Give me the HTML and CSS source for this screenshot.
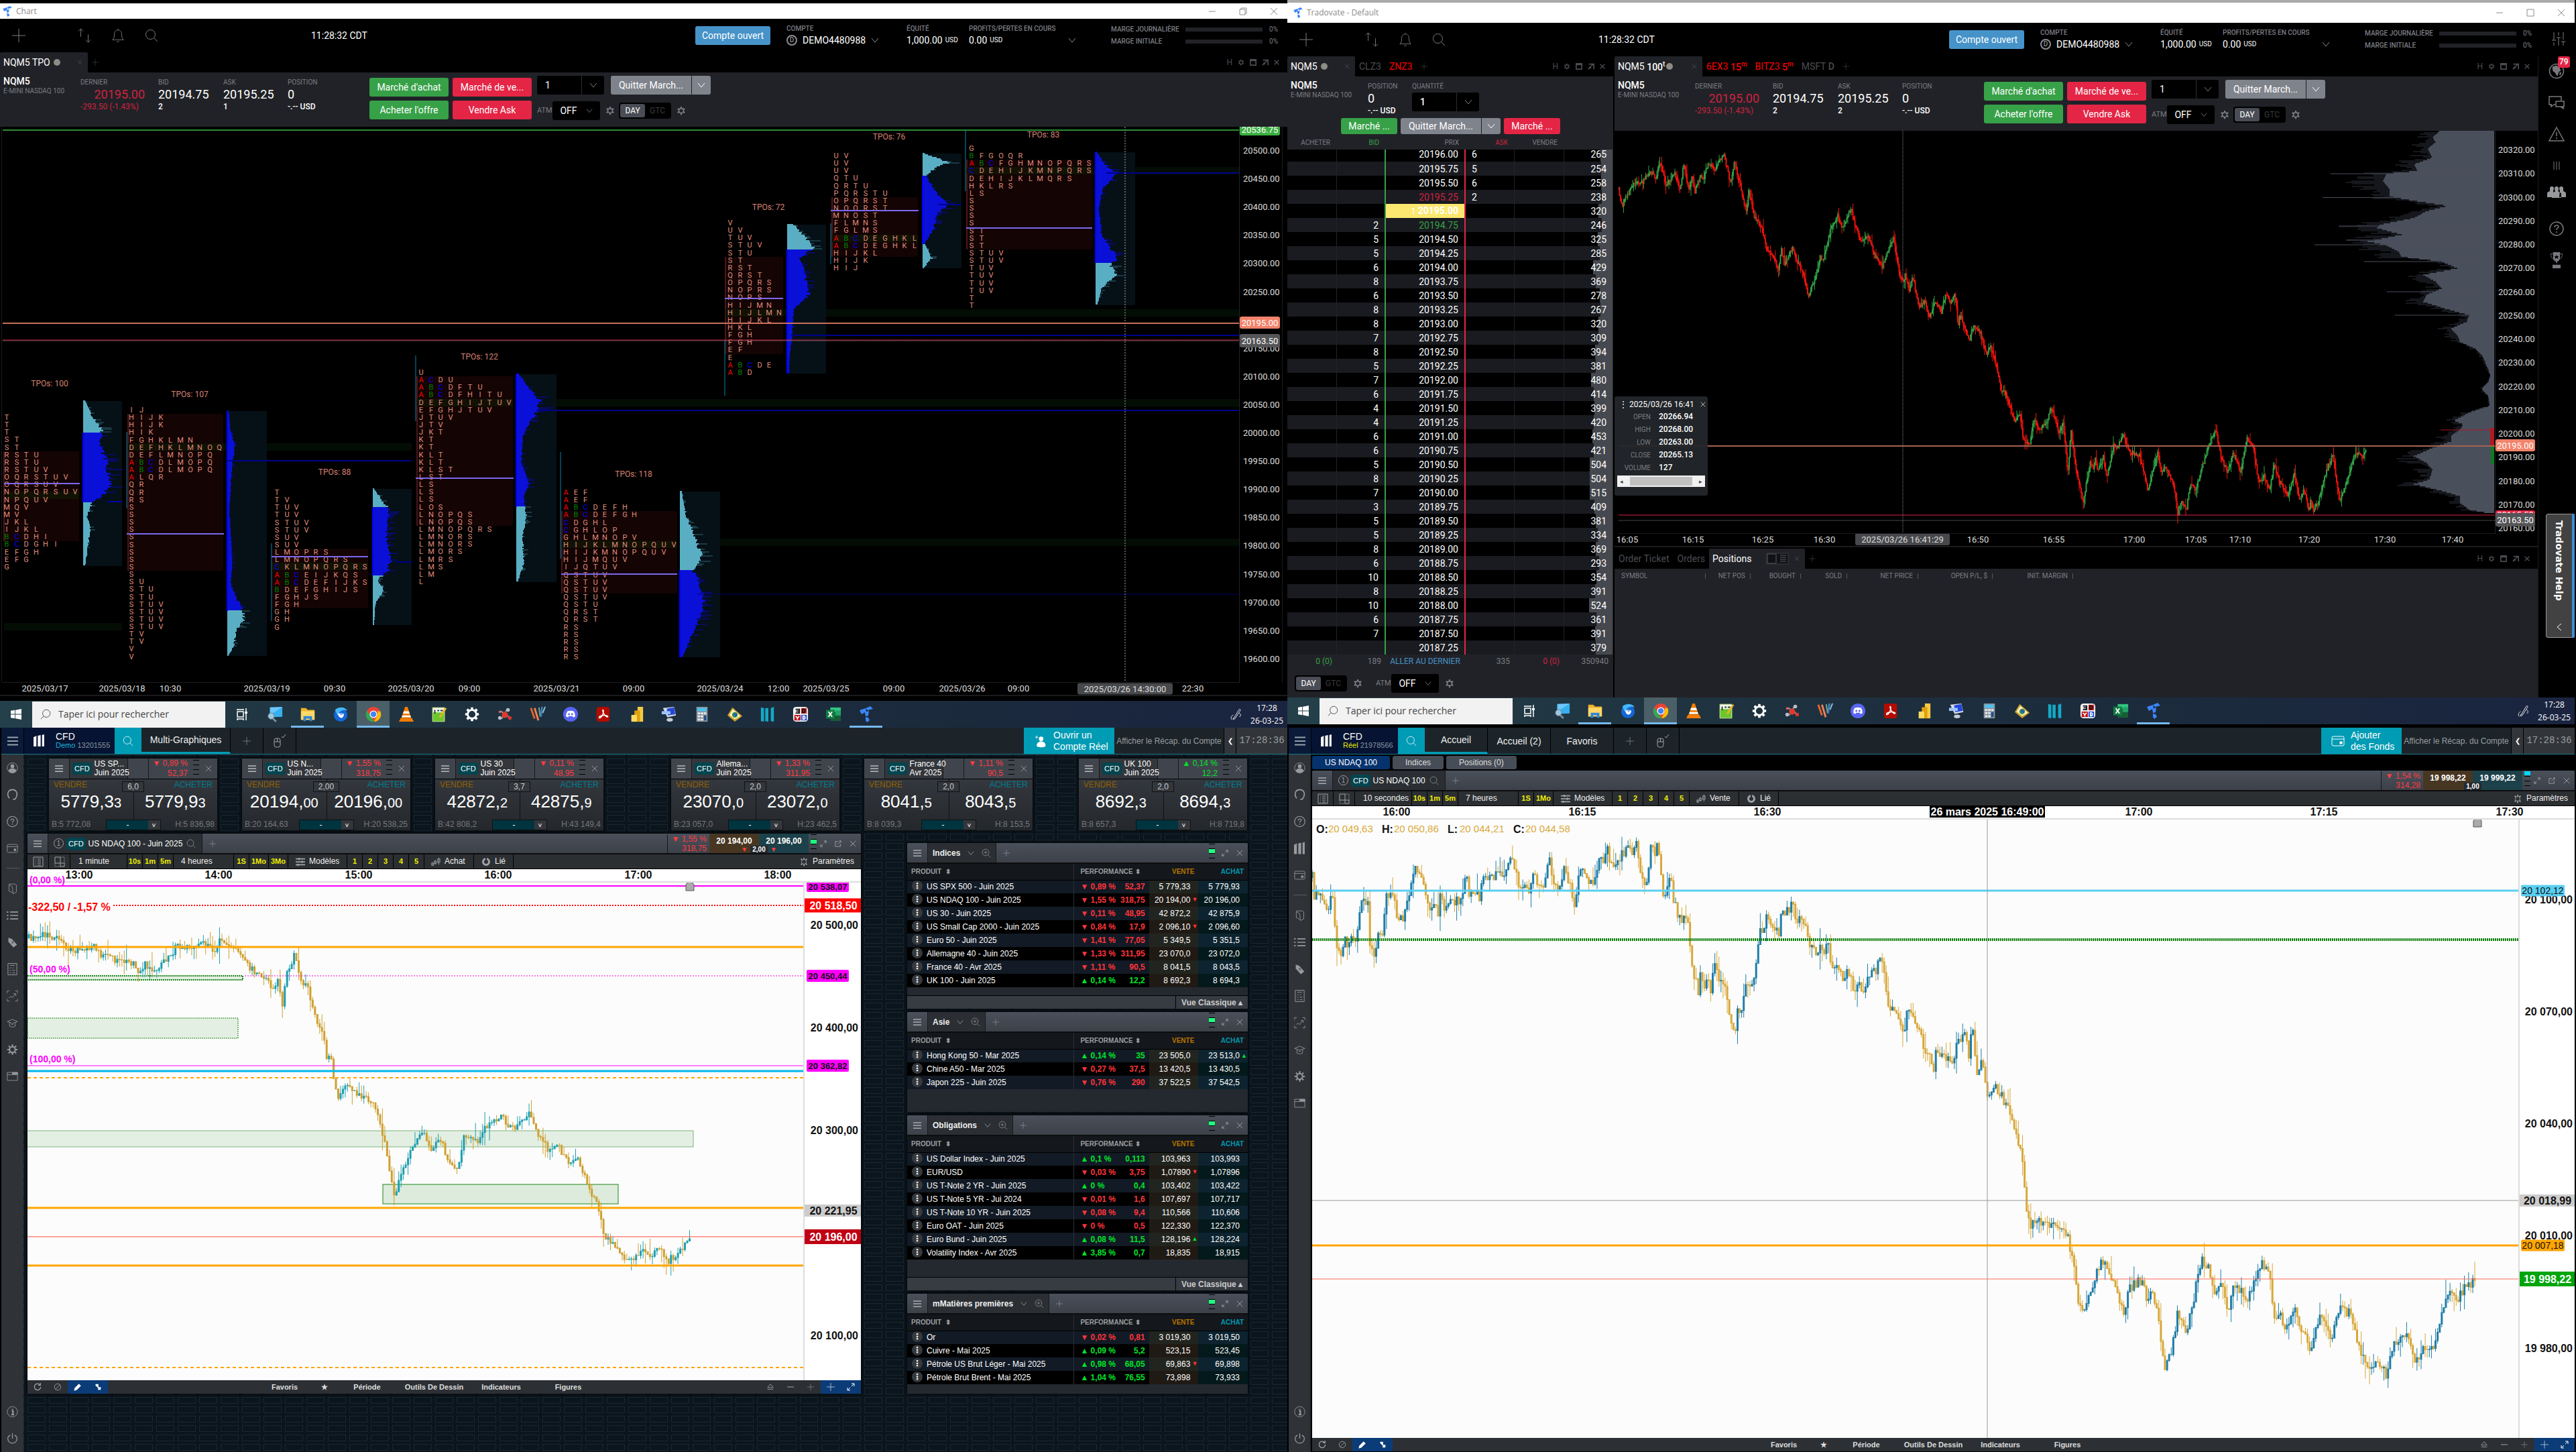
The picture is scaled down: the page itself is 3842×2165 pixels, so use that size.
FILE: index.html
```html
<!DOCTYPE html>
<html lang="fr">
<head>
<meta charset="utf-8">
<title>Poste de trading</title>
<link rel="stylesheet" href="styles.css">
</head>
<body>
<svg class="sprite" aria-hidden="true">
  <symbol id="i-plus" viewBox="0 0 20 20"><path d="M10 0v20M0 10h20"/></symbol>
  <symbol id="i-arrows" viewBox="0 0 22 24"><path d="M5 14V1M1 5l4-4 4 4M17 10v13M13 19l4 4 4-4"/></symbol>
  <symbol id="i-bell" viewBox="0 0 20 22"><path d="M1 18h18c-2-2-3-4-3-9 0-4-2-7-6-7S4 5 4 9c0 5-1 7-3 9zM8 21h4M10 0v2"/></symbol>
  <symbol id="i-search" viewBox="0 0 20 20"><circle cx="8.500" cy="8.500" r="7"/><path d="M13.500 13.500L19 19"/></symbol>
  <symbol id="i-zoom" viewBox="0 0 20 20"><circle cx="8.500" cy="8.500" r="7"/><path d="M13.500 13.500L19 19M5 8.500h7M8.500 5v7"/></symbol>
  <symbol id="i-x" viewBox="0 0 12 12"><path d="M1 1l10 10M11 1L1 11"/></symbol>
  <symbol id="i-min" viewBox="0 0 12 12"><path d="M1 6h10"/></symbol>
  <symbol id="i-restore" viewBox="0 0 12 12"><path d="M1 3h8v8H1zM3 3V1h8v8H9"/></symbol>
  <symbol id="i-box" viewBox="0 0 12 12"><path d="M1 1h10v10H1z"/></symbol>
  <symbol id="i-max" viewBox="0 0 12 12"><path d="M1 1h10v10H1zM1 3h10"/></symbol>
  <symbol id="i-out" viewBox="0 0 12 12"><path d="M2 2h9v9M11 1L6 6M1 11l4-4M3 7h2v3"/></symbol>
  <symbol id="i-pop" viewBox="0 0 12 12"><path d="M6 2H1v9h9V6M11 1L5 7M8 1h3v3"/></symbol>
  <symbol id="i-chev" viewBox="0 0 12 12"><path d="M1 3l5 6 5-6"/></symbol>
  <symbol id="i-gear" viewBox="0 0 16 16"><circle cx="8" cy="8" r="4" stroke-width="2"/><path stroke-width="2.400" d="M8 1v3M8 12v3M2 4.500l2.500 1.500M11.500 10L14 11.500M2 11.500L4.500 10M11.500 6L14 4.500"/></symbol>
  <symbol id="i-menu" viewBox="0 0 16 14"><path d="M0 1.500h16M0 7h16M0 12.500h16" stroke-width="2"/></symbol>
  <symbol id="i-tv" viewBox="0 0 20 24"><path fill="#3b86f7" stroke="none" d="M0 6l9-3 1 5-7 4zM9 3l7-3 4 4-8 2zM8 9l6-2-1 7-4 1zM9 16l4 1 2 4-4 3-2-3z"/></symbol>
  <symbol id="i-sliders" viewBox="0 0 20 20"><path d="M3 0v12M3 15v5M0 12h6M10 0v5M10 8v12M7 8h6M17 0v11M17 14v6M14 14h6"/></symbol>
  <symbol id="i-globe" viewBox="0 0 24 24"><circle cx="12" cy="12" r="10.500" stroke-width="1.500"/><path fill="currentColor" d="M6 6l6-2 4 3 2 4-3 2-2 6-3-5-3-2zM17 14l2 1-2 3z"/></symbol>
  <symbol id="i-chat" viewBox="0 0 24 20"><path stroke-width="1.500" d="M5 13H1V1h18v6M4 12v4l4-3h2M11 8h12v8h-3l3 3M11 8v8h7l4 3"/></symbol>
  <symbol id="i-warn" viewBox="0 0 24 22"><path stroke-width="1.500" d="M12 1l11 20H1zM12 8v6M12 16v2"/></symbol>
  <symbol id="i-bars3" viewBox="0 0 12 12"><path d="M2 0v12M6 0v12M10 0v12"/></symbol>
  <symbol id="i-people" viewBox="0 0 28 18"><path fill="currentColor" stroke="none" d="M4 4a3 3 0 016 0c0 2-1 3-1 4l1 9H0v-5c0-3 2-3 4-4zM24 4a3 3 0 00-6 0c0 2 1 3 1 4l-1 9h10v-5c0-3-2-3-4-4zM11 4a3 3 0 016 0c0 3-1 4 0 5 2 1 4 1 4 4v5H7v-5c0-3 2-3 4-4s0-2 0-5z"/></symbol>
  <symbol id="i-help" viewBox="0 0 22 22"><circle cx="11" cy="11" r="10" stroke-width="1.500"/><path stroke-width="1.500" d="M8 9c0-4 6-4 6-1 0 2-3 2-3 5M11 15v2"/></symbol>
  <symbol id="i-cup" viewBox="0 0 22 28"><path fill="currentColor" stroke="none" d="M5 0h12v9c0 5-3 7-5 7v3h-2v-3c-2 0-5-2-5-7zM4 22h14v6H4z"/><path d="M5 3H1c0 6 2 8 5 9M17 3h4c0 6-2 8-5 9"/><path fill="#000" stroke="none" d="M11 4l1 3h3l-2 2 1 3-3-2-3 2 1-3-2-2h3z"/></symbol>
  <symbol id="i-user" viewBox="0 0 20 20"><circle cx="10" cy="10" r="9"/><circle cx="10" cy="7" r="3.500" fill="currentColor" stroke="none"/><path fill="currentColor" stroke="none" d="M3 15c2-4 4-4 7-4s5 0 7 4c-4 5-10 5-14 0z"/></symbol>
  <symbol id="i-adduser" viewBox="0 0 20 24"><path d="M0 5h6M3 2v6"/><circle cx="11" cy="8" r="4" fill="currentColor" stroke="none"/><path fill="currentColor" stroke="none" d="M3 20c0-10 16-10 16 0 0 4-16 4-16 0z"/></symbol>
  <symbol id="i-headset" viewBox="0 0 20 20"><path stroke-width="2" d="M3 14c-3-8 1-13 7-13s10 5 7 13M3 14l2 2M17 14l-3 4h-3"/></symbol>
  <symbol id="i-card" viewBox="0 0 20 16"><rect x="1" y="1" width="18" height="14" rx="2"/><path d="M1 5h18"/><rect x="13" y="9" width="3" height="3" fill="currentColor"/></symbol>
  <symbol id="i-cmc" viewBox="0 0 16 18"><path fill="currentColor" stroke="none" d="M0 4l4-2v15H0zM6 2l4-1v16H6zM12 1l3-1v17h-3z"/></symbol>
  <symbol id="i-doc" viewBox="0 0 20 20"><path d="M4 2h11l2 2v12l-6 3-1-12-6-4v11l6 3"/></symbol>
  <symbol id="i-list" viewBox="0 0 20 16"><path stroke-width="2" d="M0 2h3M6 2h14M0 8h3M6 8h14M0 14h3M6 14h14"/></symbol>
  <symbol id="i-tag" viewBox="0 0 20 20"><path fill="currentColor" stroke="none" d="M3 2l6 2 9 10-6 5L3 9z"/><path stroke="#2f3236" d="M8 8l4 4M9 12l3-4"/></symbol>
  <symbol id="i-calc" viewBox="0 0 18 20"><path d="M2 1h14v18H2zM5 4h8M5 8h2M9 8h2M5 12h2M9 12h4M5 16h2M9 16h4"/></symbol>
  <symbol id="i-scan" viewBox="0 0 20 20"><path d="M1 5V1h4M15 1h4v4M19 15v4h-4M5 19H1v-4M4 13l3-2 3 2 5-7M12 6h4v4"/></symbol>
  <symbol id="i-grad" viewBox="0 0 20 16"><path d="M1 6l9-4 9 4-9 3zM5 8v6c3 2 7 2 10 0V8M8 11h4"/></symbol>
  <symbol id="i-cog" viewBox="0 0 20 20"><circle cx="10" cy="10" r="5" stroke-width="2.500"/><path stroke-width="2.500" d="M10 1v3M10 16v3M1 10h3M16 10h3M3.500 3.500l2 2M14.500 14.500l2 2M3.500 16.500l2-2M14.500 5.500l2-2"/></symbol>
  <symbol id="i-win" viewBox="0 0 20 16"><path d="M1 1h18v14H1zM1 5h18"/><path fill="currentColor" d="M10 1h9v3h-9z"/></symbol>
  <symbol id="i-info" viewBox="0 0 20 20"><circle cx="10" cy="10" r="9"/><path stroke-width="2.500" d="M10 5v2M9 9h2v6M8 15h5"/></symbol>
  <symbol id="i-power" viewBox="0 0 20 20"><path stroke-width="1.500" d="M10 1v9M6 4c-7 4-4 14 4 14s11-10 4-14"/></symbol>
  <symbol id="i-mouse" viewBox="0 0 20 20"><rect x="2" y="6" width="9" height="13" rx="3"/><path d="M2 11h9M6.500 6v5M13 3l2 2 4-5"/></symbol>
  <symbol id="i-win10" viewBox="0 0 18 18"><path fill="#fff" stroke="none" d="M0 3l7-1v6.500H0zM8 2l10-2v8.500H8zM0 9.500h7V16l-7-1zM8 9.500h10V18L8 16z"/></symbol>
  <symbol id="i-pagelist" viewBox="0 0 16 16"><path d="M1 1h14v14H1zM4 4h1M7 4h5M4 7h1M7 7h5M4 10h1M7 10h5M4 13h1M7 13h5"/></symbol>
  <symbol id="i-split" viewBox="0 0 34 18"><path fill="#111216" stroke="#3a3b40" d="M1 1h32v16H1z"/><path d="M2 2h13v14H2zM21 4h9M21 7h9M21 10h9M21 13h9"/></symbol>
  <symbol id="i-grid" viewBox="0 0 16 16"><path d="M1 1h8v9H1zM9 10h6v5H9z"/><path stroke-dasharray="1 1" d="M9 1h6v9M1 10v5h8"/></symbol>
  <symbol id="i-models" viewBox="0 0 16 14"><path stroke-width="2" d="M0 2h5M7 2h9M0 7h10M12 7h4M0 12h3M5 12h11M6 0v4M11 5v4M4 10v4"/></symbol>
  <symbol id="i-candles" viewBox="0 0 16 14"><path d="M2 8v6M1 9h3v4H1zM7 4v8M5 6h4v4H5zM13 0v12M11 2h4v6h-4z"/></symbol>
  <symbol id="i-link" viewBox="0 0 14 14"><circle cx="7" cy="7" r="4.500" stroke-width="3"/><path stroke="#2b2f33" stroke-width="2" d="M7 0v5"/></symbol>
  <symbol id="i-bulb" viewBox="0 0 16 16"><circle cx="8" cy="8" r="4"/><path stroke-width="2" d="M8 1v3M8 12v3M3 3l2 2M11 11l2 2M3 13l2-2M11 5l2-2"/></symbol>
  <symbol id="i-expand" viewBox="0 0 12 12"><path d="M7 1h4v4M11 1L7 5M5 11H1V7M1 11l4-4"/></symbol>
  <symbol id="i-refresh" viewBox="0 0 14 14"><path stroke-width="1.500" d="M11 3a5.500 5.500 0 101.500 4M12 0v4H8"/></symbol>
  <symbol id="i-ban" viewBox="0 0 14 14"><circle cx="7" cy="7" r="5.500"/><path d="M3 11l8-8"/></symbol>
  <symbol id="i-pencil" viewBox="0 0 14 14"><path fill="currentColor" d="M1 13l1-4 7-7 3 3-7 7z"/></symbol>
  <symbol id="i-node" viewBox="0 0 14 14"><path stroke-width="2" d="M3 3h4v4M3 3l8 8M7 11h4V7"/></symbol>
  <symbol id="i-eject" viewBox="0 0 14 14"><path d="M7 2l5 6H2zM2 11h10"/></symbol>
  <symbol id="i-taskview" viewBox="0 0 18 18"><path stroke-width="1.500" d="M2 5h9v8H2zM2 1v2M11 1v2M2 2h9M2 16h9M2 18v-3M11 18v-3M15 0v5M15 8v10"/><path stroke-width="3" d="M13 6.500h4"/></symbol>
  <symbol id="i-pen" viewBox="0 0 18 20"><path d="M5 18l9-15c2-3 4-1 2 2L8 17c-2 3-4 2-3-1M5 11c-4 2-5 7-2 8M15 8c4 3 2 6 0 6"/></symbol>
  <symbol id="t-loupe" viewBox="0 0 26 26"><path fill="#38b0f0" d="M5 2l20-1v16l-20 1z"/><path fill="#8ed8ff" d="M5 2l20-1L5 14z" opacity=".6"/><circle cx="7" cy="16" r="5" fill="#9fc6dc" stroke="#5e7f92"/><path stroke="#7c8f9a" stroke-width="3" d="M10 20l5 5"/></symbol>
  <symbol id="t-folder" viewBox="0 0 26 26"><path fill="#f0b429" d="M2 3h8l3 3h11v16H2z"/><path fill="#ffd869" d="M2 8h22v14H2z"/><path fill="#2f86d6" d="M6 24v-8h14v8h-4v-4h-6v4z"/></symbol>
  <symbol id="t-bird" viewBox="0 0 26 26"><circle cx="13" cy="14" r="11" fill="#1566d6"/><path fill="#44b8ff" d="M4 6c6-6 16-5 20 1-6-2-14 0-16 8z"/><path fill="#fff" d="M9 11l9 1c1 4-2 7-4 7s-6-3-5-8z"/><path fill="#7fb5ee" d="M9 11l5 4 4-3z"/></symbol>
  <symbol id="t-chrome" viewBox="0 0 26 26"><circle cx="13" cy="13" r="12" fill="#ea4335"/><path fill="#34a853" d="M2.500 7L9 17l5 8C3 26-2 15 2.500 7z"/><path fill="#fbbc05" d="M14 25l5-10 1-7h4c4 9-3 17-10 17z"/><circle cx="13" cy="13" r="6" fill="#fff"/><circle cx="13" cy="13" r="4.600" fill="#4285f4"/></symbol>
  <symbol id="t-vlc" viewBox="0 0 26 26"><path fill="#f57c00" d="M11 1h4l6 18H5z"/><path fill="#fff" d="M9 8h8l1.500 4H7.500zM6.500 15h13l1 3h-15z"/><path fill="#f57c00" d="M4 19h18l3 6H1z"/></symbol>
  <symbol id="t-note" viewBox="0 0 26 26"><path fill="#f4f8ea" stroke="#6b8e3c" d="M2 2h20v23H2z"/><path fill="#6bc62c" d="M3 10h18v14H3z"/><path stroke="#234" stroke-width="2" d="M6 6v6M10 7h3M15 7h4"/><path stroke="#e8b422" stroke-width="3" d="M14 18L24 3"/></symbol>
  <symbol id="t-gear" viewBox="0 0 26 26"><circle cx="13" cy="13" r="7" fill="none" stroke="#fff" stroke-width="3"/><path stroke="#fff" stroke-width="4" d="M13 2v4M13 20v4M2 13h4M20 13h4M5 5l3 3M18 18l3 3M5 21l3-3M18 8l3-3"/></symbol>
  <symbol id="t-crab" viewBox="0 0 26 26"><path stroke="#99a" stroke-width="2" d="M6 8l7 4 4-8M8 20l5-7 8 5"/><circle cx="13" cy="14" r="5" fill="#e03a2f"/><circle cx="5" cy="19" r="3" fill="#b8bfc6"/><circle cx="21" cy="19" r="3" fill="#d33"/><circle cx="5" cy="9" r="2" fill="#d66"/><circle cx="18" cy="6" r="3" fill="#b8bfc6"/></symbol>
  <symbol id="t-lines" viewBox="0 0 26 26"><path stroke="#e8662d" stroke-width="3" d="M2 3l6 17"/><path stroke="#f0835a" stroke-width="3" d="M8 3l6 20"/><path stroke="#7fa98a" stroke-width="2" d="M15 2l2 15"/><path stroke="#3d7fb8" stroke-width="3" d="M20 1l-2 16"/><path stroke="#8fc2e8" stroke-width="2" d="M25 1l-4 10"/></symbol>
  <symbol id="t-discord" viewBox="0 0 26 26"><circle cx="13" cy="13" r="12" fill="#5865f2"/><path fill="#fff" d="M8 8c3-1 7-1 10 0 2 3 3 6 2 9l-3 1-1-2h-6l-1 2-3-1c-1-3 0-6 2-9z"/><circle cx="10.500" cy="13" r="1.600" fill="#5865f2"/><circle cx="15.500" cy="13" r="1.600" fill="#5865f2"/></symbol>
  <symbol id="t-pdf" viewBox="0 0 26 26"><rect x="2" y="1" width="21" height="24" rx="4" fill="#b30b00"/><path fill="none" stroke="#fff" stroke-width="1.600" d="M12 6c2 0 1 5-1 9s-5 5-5 3 6-4 11-3 3 3 1 2-7-7-6-11z"/></symbol>
  <symbol id="t-bi" viewBox="0 0 26 26"><path fill="#f6c944" d="M15 1h9v24h-9z"/><path fill="#e0a00c" d="M10 7h9v18h-9z"/><path fill="#fbdb62" d="M5 14h9v11H5z"/></symbol>
  <symbol id="t-pc" viewBox="0 0 26 26"><path fill="#d6dcea" d="M3 3l18-2 3 14-14 3z"/><path fill="#2446d8" d="M9 4l12-2 2 11-12 2z"/><path fill="#9ec3ff" d="M1 8h14v5H1z"/><ellipse cx="14" cy="22" rx="5" ry="3" fill="#c8ccd6"/></symbol>
  <symbol id="t-calc" viewBox="0 0 26 26"><path fill="#8c959e" d="M4 1h18v24H4z"/><path fill="#45c4f4" d="M6 3h14v5H6z"/><path fill="#e6eaee" d="M6 10h4v3H6zM11 10h4v3h-4zM16 10h4v3h-4zM6 15h4v3H6zM11 15h4v3h-4zM6 20h4v3H6zM11 20h4v3h-4z"/><path fill="#1e4f8a" d="M16 15h4v8h-4z"/></symbol>
  <symbol id="t-gold" viewBox="0 0 26 26"><path fill="#c8a02e" d="M1 15L9 2l16 14-12 9z"/><path fill="#fff3c0" d="M4 14l6-9 12 11-9 5z"/><circle cx="13" cy="14" r="4.500" fill="#2f8f5b"/><path fill="#2c58c0" d="M10 12l5 5 2-5z"/></symbol>
  <symbol id="t-cmc" viewBox="0 0 26 26"><path fill="#14a9c4" d="M2 2l5 1v22l-5-1zM9 3l5 0v22l-5-1zM18 3l5-2v24l-5-1z"/></symbol>
  <symbol id="t-cells" viewBox="0 0 26 26"><rect x="1" y="1" width="24" height="24" rx="5" fill="#f4f4f4"/><path fill="#d22" d="M14 3h9v9h-9z"/><path fill="#c2161e" d="M3 14h10v9H3z"/><path fill="#234bd8" d="M14 14h9v9h-9z"/><path fill="none" stroke="#111" stroke-width="2" d="M5 5h6v6H5M6 8h5M16 5v5h2c3 0 3-5 0-5z"/><path fill="none" stroke="#fff" stroke-width="1.800" d="M5 16l3 3 3-3M8 19v3M17 16v5h1c3 0 3-5 0-5z"/></symbol>
  <symbol id="t-xl" viewBox="0 0 26 26"><path fill="#33c481" d="M8 2h17v8H8z"/><path fill="#185c37" d="M8 12h17v12H8z"/><path fill="#21a366" d="M16 7h9v8h-9z"/><path fill="#107c41" d="M1 6h14v14H1z"/><path stroke="#fff" stroke-width="2" d="M5 9l6 8M11 9l-6 8"/></symbol>
</svg>

<main class="desktop">
  <section class="column">
    <!-- Detached chart window -->
    <div class="screen screen--chart">
      <header class="titlebar"><svg class="ic logo"><use href="#i-tv"/></svg><span>Chart</span><span class="grow"></span>
        <button class="wbtn" aria-label="Réduire"><svg class="ic s12"><use href="#i-min"/></svg></button><button class="wbtn" aria-label="Restaurer"><svg class="ic s12"><use href="#i-restore"/></svg></button><button class="wbtn" aria-label="Fermer"><svg class="ic s12"><use href="#i-x"/></svg></button></header>
      <div class="tools" data-tools></div>
      <nav class="tabs"><button class="tab tab--on tab--first">NQM5 TPO <i class="dot"></i><svg class="ic s8 end"><use href="#i-x"/></svg></button><button class="tab tab--icon" aria-label="Ajouter"><svg class="ic s10"><use href="#i-plus"/></svg></button><span class="grow"></span><span class="panelctl" data-panelctl></span></nav>
      <div class="quote" data-quote="1"></div>
      <div class="plotrow tpo"><div class="plot" id="tpo"></div><div class="yaxis" id="tpo-y"></div></div>
      <div class="xaxis" id="tpo-x"></div>
    </div>
    <footer class="taskbar" data-taskbar></footer>

    <!-- CMC demo platform -->
    <section class="cmc">
      <header class="cmchead">
        <button class="burger" aria-label="Menu"><svg class="ic s16"><use href="#i-menu"/></svg></button>
        <div class="brand brand--demo"><svg class="ic cm"><use href="#i-cmc"/></svg><div><b>CFD</b><span><em>Demo</em> 13201555</span></div></div>
        <button class="find" aria-label="Rechercher"><svg class="ic s16"><use href="#i-search"/></svg></button>
        <button class="page page--on page--wide">Multi-Graphiques</button><button class="page page--sq" aria-label="Ajouter"><svg class="ic s12"><use href="#i-plus"/></svg></button><button class="page page--sq" aria-label="Souris"><svg class="ic s20"><use href="#i-mouse"/></svg></button>
        <span class="grow"></span>
        <button class="cta cta--open"><svg class="ic s20"><use href="#i-adduser"/></svg><span>Ouvrir un<br>Compte Réel</span></button>
        <a class="recap" href="#recap">Afficher le Récap. du Compte</a><button class="arrow" aria-label="Déplier">❮</button><time class="clock">17:28:36</time>
      </header>
      <div class="cmcbody">
        <aside class="rail" data-rail="demo"></aside>
        <div class="board">
          <div class="cards" id="cards"></div>
          <div class="workspace">
            <article class="panel chartpanel">
              <header class="phead"><button class="pmenu" aria-label="Menu"><svg class="ic s12"><use href="#i-menu"/></svg></button><div class="ptab"><span class="num">1</span><span class="cfd">CFD</span>US NDAQ 100 - Juin 2025<svg class="ic s14"><use href="#i-search"/></svg></div><button class="padd" aria-label="Ajouter"><svg class="ic s10"><use href="#i-plus"/></svg></button><span class="grow"></span>
                <div class="chg dn"><span>▼ 1,55 %</span><span>318,75</span></div><div class="bidask"><b class="sell">20 194,00</b><b class="buy">20 196,00</b><span class="spread"><i class="dn">▼</i><u>2,00</u><i class="dn">▼</i></span></div><span class="meter"></span><svg class="ic s10"><use href="#i-expand"/></svg><svg class="ic s10"><use href="#i-pop"/></svg><svg class="ic s10"><use href="#i-x"/></svg></header>
              <div class="ctools" data-ctools="demo"></div>
              <div class="times" id="bl-x"></div>
              <div class="plotrow blplot"><div class="plot" id="bl"></div><div class="yaxis yaxis--light" id="bl-y"></div></div>
              <footer class="cfoot" data-cfoot></footer>
            </article>
            <div class="lists" id="lists"></div>
          </div>
        </div>
      </div>
    </section>
  </section>

  <section class="column">
    <!-- Main trading window -->
    <div class="screen screen--main">
      <header class="titlebar titlebar--tall"><svg class="ic logo"><use href="#i-tv"/></svg><span>Tradovate - Default</span><span class="grow"></span>
        <button class="wbtn" aria-label="Réduire"><svg class="ic s12"><use href="#i-min"/></svg></button><button class="wbtn" aria-label="Agrandir"><svg class="ic s12"><use href="#i-box"/></svg></button><button class="wbtn" aria-label="Fermer"><svg class="ic s12"><use href="#i-x"/></svg></button></header>
      <div class="tools tools--slider" data-tools></div>
      <div class="split">
        <section class="dom">
          <nav class="tabs"><button class="tab tab--on tab--dom">NQM5 <i class="dot"></i><svg class="ic s8 end"><use href="#i-x"/></svg></button><button class="tab dim">CLZ3</button><button class="tab hot">ZNZ3</button><button class="tab tab--icon" aria-label="Ajouter"><svg class="ic s10"><use href="#i-plus"/></svg></button><span class="grow"></span><span class="panelctl" data-panelctl></span></nav>
          <div class="domhead">
            <div class="sym"><b>NQM5</b><small>E-MINI NASDAQ 100</small></div>
            <div class="fact f66"><small>POSITION</small><strong>0</strong><span>-.-- USD</span></div>
            <div class="fact"><label for="qty-dom">QUANTITÉ</label><span class="combo"><input id="qty-dom" value="1"><button aria-label="Choisir"><svg class="ic s12"><use href="#i-chev"/></svg></button></span></div>
          </div>
          <div class="dombtns"><button class="btn green">Marché ...</button><span class="duo"><button class="btn grey">Quitter March...</button><button class="btn grey" aria-label="Plus"><svg class="ic s12"><use href="#i-chev"/></svg></button></span><button class="btn red">Marché ...</button></div>
          <div class="ladderwrap"><table class="ladder"><thead><tr><th>ACHETER</th><th class="up">BID</th><th>PRIX</th><th class="down">ASK</th><th>VENDRE</th><th></th></tr></thead><tbody id="ladder"></tbody>
            <tfoot><tr><td class="up">0 (0)</td><td>189</td><td class="go">ALLER AU DERNIER</td><td>335</td><td class="down">0 (0)</td><td>350940</td></tr></tfoot></table></div>
          <div class="domfoot"><span class="seg"><button class="on">DAY</button><button>GTC</button></span><svg class="ic s14"><use href="#i-gear"/></svg><span class="atm">ATM</span><button class="off">OFF <svg class="ic s10"><use href="#i-chev"/></svg></button><svg class="ic s14"><use href="#i-gear"/></svg></div>
        </section>
        <section class="work">
          <nav class="tabs"><button class="tab tab--on tab--first">NQM5 <b>100<sup>t</sup></b> <i class="dot"></i><svg class="ic s8 end"><use href="#i-x"/></svg></button><button class="tab hot">6EX3 <b>15<sup>m</sup></b></button><button class="tab hot">BITZ3 <b>5<sup>m</sup></b></button><button class="tab dim">MSFT <b>D</b></button><button class="tab tab--icon" aria-label="Ajouter"><svg class="ic s10"><use href="#i-plus"/></svg></button><span class="grow"></span><span class="panelctl" data-panelctl></span></nav>
          <div class="quote" data-quote="2"></div>
          <div class="plotrow tick"><div class="plot" id="tick"></div><div class="yaxis" id="tick-y"></div>
            <div class="tip"><div class="tiphead">⋮ 2025/03/26 16:41<svg class="ic s8"><use href="#i-x"/></svg></div><dl><dt>OPEN</dt><dd>20266.94</dd><dt>HIGH</dt><dd>20268.00</dd><dt>LOW</dt><dd>20263.00</dd><dt>CLOSE</dt><dd>20265.13</dd><dt>VOLUME</dt><dd>127</dd></dl><div class="tipscroll"><span>◂</span><i></i><span>▸</span></div></div></div>
          <div class="xaxis" id="tick-x"></div>
          <nav class="tabs tabs--low"><button class="tab dim">Order Ticket</button><button class="tab dim">Orders</button><button class="tab tab--on tab--pos">Positions<svg class="ic twin end"><use href="#i-split"/></svg><svg class="ic s8"><use href="#i-x"/></svg></button><button class="tab tab--icon" aria-label="Ajouter"><svg class="ic s10"><use href="#i-plus"/></svg></button><span class="grow"></span><span class="panelctl" data-panelctl></span></nav>
          <div class="positions"><table><thead><tr><th>SYMBOL</th><th>NET POS</th><th>BOUGHT</th><th>SOLD</th><th>NET PRICE</th><th>OPEN P/L, $</th><th>INIT. MARGIN</th><th></th></tr></thead></table></div>
        </section>
        <aside class="side"><span class="globe"><svg class="ic s24"><use href="#i-globe"/></svg><b class="badge">79</b></span><svg class="ic s24"><use href="#i-chat"/></svg><svg class="ic s24"><use href="#i-warn"/></svg><svg class="ic s12"><use href="#i-bars3"/></svg><svg class="ic s28 lit"><use href="#i-people"/></svg><svg class="ic s22"><use href="#i-help"/></svg><svg class="ic s28"><use href="#i-cup"/></svg></aside>
        <button class="helptab"><span>Tradovate Help</span><svg class="ic s12"><use href="#i-chev"/></svg></button>
      </div>
    </div>
    <footer class="taskbar taskbar--gap" data-taskbar></footer>

    <!-- CMC live platform -->
    <section class="cmc">
      <header class="cmchead">
        <button class="burger" aria-label="Menu"><svg class="ic s16"><use href="#i-menu"/></svg></button>
        <div class="brand brand--live"><svg class="ic cm"><use href="#i-cmc"/></svg><div><b>CFD</b><span><em class="real">Réel</em> 21978566</span></div></div>
        <button class="find" aria-label="Rechercher"><svg class="ic s16"><use href="#i-search"/></svg></button>
        <button class="page page--on">Accueil</button><button class="page">Accueil (2)</button><button class="page">Favoris</button><button class="page page--sq" aria-label="Ajouter"><svg class="ic s12"><use href="#i-plus"/></svg></button><button class="page page--sq" aria-label="Souris"><svg class="ic s20"><use href="#i-mouse"/></svg></button>
        <span class="grow"></span>
        <button class="cta cta--fund"><svg class="ic s20"><use href="#i-card"/></svg><span>Ajouter<br>des Fonds</span></button>
        <a class="recap" href="#recap">Afficher le Récap. du Compte</a><button class="arrow" aria-label="Déplier">❮</button><time class="clock">17:28:36</time>
      </header>
      <div class="cmcbody">
        <aside class="rail" data-rail="live"></aside>
        <div class="live">
          <nav class="pills"><button class="pill pill--on">US NDAQ 100</button><button class="pill">Indices</button><button class="pill">Positions (0)</button></nav>
          <article class="panel livepanel">
            <header class="phead"><button class="pmenu" aria-label="Menu"><svg class="ic s12"><use href="#i-menu"/></svg></button><div class="ptab"><span class="num">1</span><span class="cfd">CFD</span>US NDAQ 100<svg class="ic s14"><use href="#i-search"/></svg></div><button class="padd" aria-label="Ajouter"><svg class="ic s10"><use href="#i-plus"/></svg></button><span class="grow"></span>
              <div class="chg dn"><span>▼ 1,54 %</span><span>314,28</span></div><div class="bidask"><b class="sell">19 998,22</b><b class="buy">19 999,22</b><span class="spread"><u>1,00</u></span></div><span class="meter meter--cyan"></span><svg class="ic s10"><use href="#i-expand"/></svg><svg class="ic s10"><use href="#i-pop"/></svg><svg class="ic s10"><use href="#i-x"/></svg></header>
            <div class="ctools" data-ctools="live"></div>
            <div class="times" id="br-x"></div>
            <div class="plotrow brplot"><div class="plot" id="br"></div><div class="yaxis yaxis--light yaxis--wide" id="br-y"></div></div>
            <footer class="cfoot" data-cfoot></footer>
          </article>
        </div>
      </div>
    </section>
  </section>
</main>
<script src="app.js"></script>
</body>
</html>
```
FILE: styles.css
```css
*{box-sizing:border-box}
body{margin:0;background:#000;color:#fff;font:12px/16px Roboto,sans-serif}
button,input{font:inherit;color:inherit;background:none;border:0;padding:0;margin:0}
table{border-collapse:collapse;width:100%}
a{color:inherit;text-decoration:none}
.sprite{display:none}
.ic{fill:none;stroke:currentColor;stroke-width:1;flex:none}
.s8{width:8px;height:8px}.s10{width:10px;height:10px}.s12{width:12px;height:12px}.s14{width:14px;height:14px}
.s16{width:16px;height:16px}.s20{width:20px;height:20px}.s22{width:22px;height:22px}.s24{width:24px;height:24px}.s28{width:28px;height:28px}
.twin{width:34px;height:18px}
.grow{flex:1}
.desktop{display:grid;grid-template-columns:minmax(0,1fr) minmax(0,1fr);padding-right:2px;overflow:hidden}
.column{min-width:0}
.dn{color:#ff3b41}

/* Trading windows */
.screen{display:flex;flex-direction:column}
.screen--chart{padding:5px 0 7px}
.screen--main{border-top:4px solid #a9a9a9}
.titlebar{display:flex;align-items:center;height:23px;background:#fff;color:#8c8c8c;font:12px/16px "Open Sans",sans-serif;padding-left:4px;gap:6px}
.titlebar--tall{height:30px;padding-left:9px}
.logo{width:14px;height:16px}
.wbtn{width:40px;display:flex;justify-content:center}
.tools{display:flex;align-items:center;height:50px;padding:0 14px 0 18px;color:#7b7d83;position:relative}
.tools--slider{padding-right:64px}
.tools .tl{display:flex;align-items:center;width:446px}
.tools .tl svg:nth-child(2){margin-left:77px;margin-right:29px}
.tools .tl svg:nth-child(3){margin-right:30px}
.tools time{color:#fff;font-size:14px}
.tools .slide{position:absolute;right:14px;top:14px}
.open{width:112px;height:28px;background:#4693c9;border-radius:3px;color:#fff;font-size:14px;margin-right:24px}
.acct{display:flex;flex-direction:column;font-size:10px;line-height:14px;font-weight:500}
.acct span{color:#fff;font-size:14px;line-height:20px;font-weight:400;display:flex;align-items:center;gap:8px}
.acct em{font-style:normal;font-size:10px;margin-left:-4px}
.acct i{font:500 10px/12px Roboto;border:2px solid #8b8d92;color:#8b8d92;border-radius:50%;width:16px;height:16px;text-align:center}
.a1{width:179px}.a2{width:93px}.a3{width:212px}
.acct svg{color:#8b8d92}
.a3 span{justify-content:flex-start;padding-right:52px}.a3 svg{margin-left:auto}
.marge{display:grid;grid-template-columns:111px 115px auto;row-gap:4px;align-items:center;font-size:10px;line-height:14px;font-weight:500}
.marge i{height:6px;background:#212227}
.marge b{font-weight:400;padding-left:10px}
.tabs{display:flex;height:30px;align-items:stretch;padding-right:6px}
.tabs--low{margin-top:2px}
.tab{display:flex;align-items:center;font-size:14px;padding:0 6px;white-space:pre}
.tab--on{background:#212227;color:#fff;padding:0 8px 0 5px;border-radius:2px 2px 0 0}
.tab--first{width:131px}.tab--dom{width:101px}.tab--pos{width:143px;gap:8px}
.tab--icon{color:#3a3b3f}
.tab .end{margin-left:auto}
.tab svg{color:#55575c}
.tab sup{font-size:10px;line-height:10px}
.tab b{font-weight:500}
.dim{color:#4b4d52}.hot{color:#f00}
.dot{width:10px;height:10px;border-radius:50%;background:#8b8d86;margin-left:2px}
.panelctl{display:flex;align-items:center;gap:8px;color:#4a4c52;font-size:12px;padding-right:6px}
.panelctl svg{stroke-width:2}
.quote,.domhead{display:flex;height:81px;background:#212227;padding:5px 5px 0}
.sym{width:115px;display:flex;flex-direction:column}
.sym b{font-weight:500;font-size:14px;line-height:16px}
.sym small,.fact small,.fact label{font-size:10px;line-height:16px;color:#7b7d83}
.sym small{line-height:14px;font-size:10px}
.fact{display:flex;flex-direction:column}
.fact small,.fact label{padding-top:2px}
.fact strong{font-weight:400;font-size:18px;line-height:20px}
.fact span{font-size:12px;line-height:17px;font-weight:500}
.fact .combo{margin-top:1px}
.last{width:96px;margin-right:20px}
.last strong{text-align:right;color:#cf2340}
.last span{color:#cf2340;font-weight:400}
.f66{width:66px}.f97{width:97px}.f96{width:96px}.f122{width:122px}
.orders{display:grid;grid-template-columns:118px 118px;grid-auto-rows:28px;gap:6px;padding-top:3px;margin-right:8px}
.btn{height:28px;border-radius:3px;color:#fff;font-size:14px;font-weight:400}
.green{background:#37a148}.red{background:#e42545}.grey{background:#7f838c}
.ctl{display:flex;flex-direction:column;gap:10px}
.ctl div{display:flex;align-items:center}
.combo{display:flex;width:100px;height:28px;background:#000;border-radius:3px}
.combo input{width:67px;padding-left:12px;font-size:14px;border-right:1px solid #2c2d33}
.combo button{flex:1;color:#7b7d83;display:flex;align-items:center;justify-content:center}
.duo{display:flex;gap:1px;margin-left:10px}
.duo .btn:first-child{width:120px;border-radius:3px 0 0 3px}
.duo .btn:last-child{width:28px;border-radius:0 3px 3px 0;display:flex;align-items:center;justify-content:center}
.atm{font-size:11px;color:#7b7d83;width:23px}
.off{width:71px;height:28px;background:#000;border-radius:3px;display:flex;align-items:center;justify-content:space-around;font-size:14px;padding:0 5px}
.off svg{color:#7b7d83}
.seg{display:flex;width:78px;height:24px;background:#000;border-radius:4px;padding:2px}
.seg button{flex:1;font-size:12px;color:#3a3b3f}
.seg .on{background:#4a4d55;color:#fff;border-radius:3px}
.ctl div>svg,.domfoot>svg{color:#7b7d83;margin:0 6px 0 8px}
.plotrow{display:flex;position:relative;min-width:0}
.plot{flex:1;min-width:0;overflow:hidden}
.plot svg,.yaxis svg,.times svg,.xaxis svg{display:block;width:100%;height:100%}
.tpo{height:829px;border-left:1px solid #1b1b1e;border-right:1px solid #1b1b1e;margin:0 7px 0 2px}
.tpo .plot{margin-left:1px}
.yaxis{width:64px;flex:none;border-left:1px solid #222}
.tpo .plot,.tick .plot{border-bottom:1px solid #1d1d20}
.xaxis{height:20px;border-bottom:2px solid #1b1b1e}
.yaxis--light{width:86px;background:#fff;border-left:2px solid #ddd}
.yaxis--wide{width:84px}

/* Ladder */
.split{display:flex;position:relative}
.dom{width:486px;flex:none;background:#212227}
.dom .tabs{background:#000}
.dom .domhead{height:60px}
.dombtns{display:flex;gap:5px;padding-left:80px;margin-top:2px}
.dombtns .btn{height:24px;width:84px}
.dombtns .duo{margin:0}
.ladderwrap{height:791px;margin-top:3px}
.ladder{table-layout:fixed}
.ladder th{height:20px;font-size:10px;line-height:14px;font-weight:400;color:#7b7d83;text-align:right;padding:0 8px 0 0;border-right:2px solid #212227}
.ladder th:nth-child(1){width:73px}.ladder th:nth-child(2){width:73px}.ladder th:nth-child(3){width:119px}.ladder th:nth-child(4){width:73px}.ladder th:nth-child(5){width:74px}
.ladder tbody td{height:21px;padding:0 9px;font-size:14px;line-height:18px;text-align:right;border-right:1px solid #222327;background:#000}
.ladder tbody tr:nth-child(even) td{background:#1a1b20}
.ladder tbody tr:first-child td{height:18px;line-height:12px;padding-bottom:4px}
.ladder tbody td:nth-child(2){border-right:2px solid #37a148}
.ladder tbody td:nth-child(3){border-right:2px solid #e42545}
.ladder tbody td:nth-child(4){text-align:left}
.ladder tbody td:nth-child(6){position:relative;border:0}
.ladder tbody td:nth-child(6) i{position:absolute;right:0;top:0;bottom:0;background:#46484f}
.ladder tbody td:nth-child(6) span{position:relative}
.ladder tbody .hit{background:#fbe870!important;font-weight:700}
.ladder tbody .hit small{font-weight:400;font-size:12px}
.ladder tfoot td{height:20px;font-size:12px;color:#7b7d83;text-align:right;padding:0 6px 0 0;white-space:nowrap}
.up,.ladder tfoot .up,.ladder th.up{color:#37a148}.down,.ladder tfoot .down,.ladder th.down{color:#cf2340}
.ladder tfoot .go{color:#4693c9;text-align:center;padding:0}
.domfoot{display:flex;align-items:center;height:46px;padding:4px 0 0 11px}
.domfoot .atm{margin-left:14px}
.domfoot>svg{margin-left:9px}

/* Tick chart workspace */
.work{flex:1;min-width:0;margin-left:2px;display:flex;flex-direction:column;border-right:1px solid #1b1b1e}
.tick{height:601px}
.tick .plot{margin-left:6px}
.tip{position:absolute;left:0;top:396px;width:139px;height:148px;background:#23262bf0;border-radius:3px;font-size:12px;padding-top:2px}
.tip dl{margin:0;display:grid;grid-template-columns:54px 1fr;grid-auto-rows:19px;column-gap:12px;line-height:19px}
.tip dt{text-align:right;font-size:10px;color:#7b7d83}
.tip dd{margin:0;font-weight:500}
.tiphead{padding-left:7px;display:flex;align-items:center;gap:9px;height:19px}
.tipscroll{background:#f1f1f1;color:#444;display:flex;align-items:center;margin:2px 4px 0;height:17px}
.tipscroll i{flex:1;height:13px;background:#c1c1c1;margin:0 6px}
.tipscroll span{padding:0 4px;font-size:9px}
.positions{flex:1;background:#212227}
.positions th{font-weight:400;font-size:10px;color:#7b7d83;text-align:right;height:22px;padding:0 8px 0 0}
.positions th:nth-child(1){width:136px;text-align:left;padding-left:10px}
.positions th:nth-child(2){width:67px}.positions th:nth-child(3){width:75px}.positions th:nth-child(4){width:69px}.positions th:nth-child(5){width:106px}.positions th:nth-child(6){width:111px}.positions th:nth-child(7){width:120px}
.positions th:not(:last-child){background:linear-gradient(#55575c,#55575c) right center/1px 8px no-repeat}
.side{width:54px;display:flex;flex-direction:column;align-items:center;color:#77797e;padding-top:10px;gap:23px}
.side svg{height:24px}
.globe{position:relative;height:24px}
.badge{position:absolute;left:14px;top:-10px;background:#e42545;color:#fff;border-radius:3px;font:500 12px/17px Roboto;padding:0 2px}
.side .lit{color:#96989c;margin:-8px 0 8px}
.helptab{position:absolute;right:0;top:682px;width:43px;height:185px;background:#424242;border:1px solid #999;border-right:4px solid #3d8fd6;border-radius:4px 0 0 4px;display:flex;flex-direction:column;align-items:center;justify-content:space-between;padding:9px 0}
.helptab span{writing-mode:vertical-rl;font:700 14px/18px "DejaVu Sans",sans-serif}
.helptab svg{transform:rotate(90deg)}

/* Windows taskbar */
.taskbar{height:40px;display:flex;align-items:center;background:linear-gradient(90deg,#24404a,#1f3340 30%,#1b2a3c 70%,#1a2440);font:12px/19px "Open Sans",sans-serif}
.taskbar--gap{margin-bottom:5px}
.start{width:48px;display:flex;justify-content:center}
.tsearch{display:flex;align-items:center;width:288px;height:39px;background:#f2f2f2;color:#333;padding-left:12px;gap:11px}
.tsearch input{font:14px/20px "Open Sans",sans-serif;flex:1;min-width:0}
.tsearch input::placeholder{color:#444;opacity:1}
.tsearch svg{transform:scaleX(-1)}
.app{width:49px;height:40px;display:flex;align-items:center;justify-content:center}
.app svg{width:24px;height:24px;stroke:none}
.app--tv{color:#fff}.app--tv svg{stroke:currentColor;width:18px;height:18px}
.app--open{box-shadow:inset 0 -3px #76b9ed}
.app--on{background:#4b5f68;box-shadow:inset 0 -3px #76b9ed}
.tray{display:flex;align-items:center;gap:14px;padding-right:6px;text-align:center}
.tray svg{width:16px;height:20px}

/* CMC platform */
.cmc{font-family:"Liberation Sans",Arial,sans-serif;padding-left:2px}
.cmchead{display:flex;height:40px;background:#1c2429;border-bottom:1px solid #1a7a8a}
.burger{width:33px;background:#0a1a38;color:#98a0aa;display:flex;align-items:center;justify-content:center}
.brand{background:#061332;display:flex;align-items:center;gap:16px;padding-left:14px;border-left:1px solid #000}
.brand--demo{width:136px}.brand--live{width:130px}
.cm{width:17px;height:19px}
.brand div{display:flex;flex-direction:column}
.brand b{font-weight:400;font-size:14px;line-height:14px}
.brand span{font-size:11px;line-height:13px;color:#8b93a0}
.brand em{font-style:normal;color:#1fb4d8}.brand .real{color:#ee0}
.find{width:40px;background:#009bb4;display:flex;align-items:center;justify-content:center}
.page{width:94px;border-right:1px solid #000;font-size:14px;display:flex;align-items:center;justify-content:center;color:#eee}
.page--wide{width:133px}.page--sq{width:49px;color:#a0a4a8}
.page--on{border-bottom:3px solid #009bb4}
.cta{background:#009bb4;display:flex;align-items:center;gap:9px;padding-left:15px;text-align:left;font-size:14px;line-height:17px}
.cta--open{width:135px}.cta--fund{width:120px}
.recap{width:163px;font-size:12px;color:#989ca0;display:flex;align-items:center;justify-content:center;white-space:nowrap}
.arrow{width:19px;background:#32363a;border:1px solid #000;border-width:0 1px;font-size:10px}
.clock{width:76px;background:#32363a;color:#9a9da0;font:14px/38px "Liberation Mono",monospace;text-align:center}
.cmcbody{display:flex;height:1040px}
.rail{width:33px;background:#2f3236;color:#989b9e;display:flex;flex-direction:column;align-items:center}
.rail svg{margin:10px 0;height:20px;width:17px}
.rail hr{width:20px;border:0;border-top:1px solid #55585c;margin:9px 0 10px}
.board{flex:1;min-width:0;padding:6px 6px 0;background-color:#0b151d;
  background-image:linear-gradient(90deg,transparent 27px,#0b151d 27px),linear-gradient(transparent 10px,#0b151d 10px),linear-gradient(90deg,#1c262e 1px,transparent 1px,transparent 26px,#1c262e 26px),linear-gradient(#1c262e 1px,transparent 1px,transparent 9px,#1c262e 9px);
  background-size:32px 14px;background-position:6px 6px}
.cards{display:flex;gap:37px;padding-left:32px}
.card{width:251px;height:107px;background:linear-gradient(#3a3f46,#24272b);box-shadow:0 0 5px #000}
.card:nth-child(4){margin-left:64px}.card:nth-child(6){margin-left:32px}
.card header{height:31px;background:#40454d;display:flex;align-items:center;border-bottom:1px solid #000;font-size:12px;line-height:13px}
.card header>svg:first-child{margin:0 9px;color:#b8bcc0}
.card .name{display:flex;align-items:center;gap:4px;padding:0 8px 0 4px;height:30px;background:#33363b;border:1px solid #17191c;border-width:0 1px;width:88px;white-space:nowrap}
.card .pct{margin-left:auto;border-left:1px solid #17191c;height:30px;display:flex;flex-direction:column;text-align:right;width:59px;font-size:12px;line-height:15px}
.cfd{background:#00454f;border-radius:3px;padding:3px;font-size:11px;line-height:12px}
.card header>svg:last-child{margin:0 8px 0 9px;color:#a0a4a8}
.meter{width:9px;height:27px;margin-left:8px;background:repeating-linear-gradient(#000 0 1px,transparent 1px 7px)}
.face{display:grid;grid-template-columns:1fr 1fr;position:relative;height:60px}
.face small{font-size:12px;line-height:16px;padding:0 7px;color:#946000}
.face small:nth-child(2){text-align:right;color:#007d91}
.face p{margin:0;text-align:center;font-size:26px;line-height:34px;height:44px}
.face p span{font-size:20px}
.face::after{content:"";position:absolute;left:50%;top:0;bottom:0;border-left:1px solid #111}
.face u{position:absolute;left:0;right:0;margin:auto;top:3px;width:max-content;z-index:1;background:#33363b;border:1px solid #111;text-decoration:none;padding:0 7px;font-size:12px;line-height:14px;color:#c8ccd0}
.lohi{display:flex;justify-content:space-between;font-size:12px;color:#74787c;padding:0 4px;line-height:15px}
.lohi span{flex:1;white-space:nowrap}.lohi span:last-child{text-align:right}
.pick{background:#00343f;border:1px solid #111;color:#fff;width:82px;height:16px;display:flex;justify-content:space-between;padding-left:30px}
.pick i{width:18px;background:#33363b;font:normal 9px/14px "DejaVu Sans"}
.workspace{display:flex;padding-top:5px}
.panel{background:#24292f;box-shadow:0 0 5px #000}
.chartpanel{width:1243px;flex:none}
.phead{height:31px;background:linear-gradient(#4a505a,#3c4149);border-bottom:2px solid #0c0d0f;display:flex;align-items:center;font-size:12px;border-radius:2px 2px 0 0;color:#a8acb0}
.phead>svg{margin:0 7px 0 5px}
.pmenu{width:30px;display:flex;justify-content:center}
.ptab{display:flex;align-items:center;gap:4px;height:100%;background:#2b2f34;border:1px solid #17191c;border-width:0 1px;padding:0 9px 0 8px;color:#fff;font-size:12px}
.ptab svg{color:#9a9da0;margin-left:2px}
.num{border:1px solid #9a9da0;color:#9a9da0;border-radius:50%;width:15px;height:15px;line-height:13px;font-size:10px;text-align:center}
.padd{padding:0 10px;display:flex}
.chg{display:flex;flex-direction:column;text-align:right;font-size:12px;line-height:14px;padding-right:4px;width:63px;border-left:1px solid #17191c}
.bidask{position:relative;display:grid;grid-template-columns:74px 74px;height:100%;color:#fff;font-size:12px;line-height:22px;text-align:center}
.sell{background:#473722}.buy{background:#1d414a}
.spread{position:absolute;left:0;right:0;bottom:0;display:flex;gap:4px;justify-content:center;font-size:10px;line-height:11px}
.spread i{font-style:normal}.spread u{text-decoration:none;background:#24292f;padding:0 3px;font-weight:700}
.bidask+.meter{margin-left:3px;background:linear-gradient(#1eff7d,#1eff7d) 0 8px/9px 6px no-repeat,repeating-linear-gradient(#000 0 1px,transparent 1px 7px)}
.bidask+.meter--cyan{background:linear-gradient(#00d8f8,#00d8f8) 0 0/9px 6px no-repeat,repeating-linear-gradient(#000 0 1px,transparent 1px 7px)}
.ctools{display:flex;height:22px;background:#2c2f32;border-bottom:1px solid #000;font-size:12px;line-height:21px;color:#eee;white-space:nowrap}
.ctools>*{flex:none;border-right:1px solid #000;padding:0 6px;display:flex;align-items:center;gap:6px}
.ctools svg{color:#a0a4a8}
.ctools b{color:#ee0;font-size:11px;justify-content:center;padding:0;width:23px}
.ctools .sq{width:32px;justify-content:center}
.ctools .w84{width:85px;padding-left:12px}.ctools .w89{width:90px;padding-left:11px}
.ctools .w27{width:29px}
.ctools .mod{width:88px;padding-left:11px}.ctools .ach{width:74px;padding-left:10px}.ctools .lie{width:59px;padding-left:11px}
.ctools>.grow{flex:1;border:0}
.ctools .par{border:0;padding-right:10px}
.times{height:20px;background:#fff;border-bottom:2px solid #ddd;position:relative;z-index:1}
.times svg{overflow:visible}
.blplot{height:742px;background:#fcfcfc}
.brplot{height:922px;background:#fcfcfc}
.cfoot{display:flex;align-items:center;justify-content:center;height:20px;background:#2c3034;color:#ddd;font-size:11px;font-weight:700;position:relative;padding-right:18px;text-align:center}
.cfoot .n60{width:60px}.cfoot .n58{width:58px}.cfoot .n70{width:70px}.cfoot .n130{width:130px}
.cfoot .fl,.cfoot .fr{position:absolute;left:0;top:0;bottom:0;display:flex;color:#a0a4a8}
.cfoot .fr{left:auto;right:0}
.cfoot .fl>*,.cfoot .fr>*{width:30px;display:flex;align-items:center;justify-content:center}
.cfoot .blue{background:#0b3c78;color:#fff}
.lists{flex:1;min-width:0;padding:14px 53px 0 69px;display:flex;flex-direction:column;gap:5px}
.list .phead b{color:#eee;font-weight:700}
.list .phead .ptab{gap:9px;padding:0 7px}
.list .meter{background:linear-gradient(#1eff7d,#1eff7d) 0 8px/9px 6px no-repeat,repeating-linear-gradient(#000 0 1px,transparent 1px 7px);margin-right:5px}
.list table{table-layout:fixed;font-size:12px}
.list th{height:24px;background:#14171b;font-size:10px;line-height:14px;font-weight:700;color:#9a9da0;text-align:left;padding:0 6px;border-bottom:1px solid #000;white-space:nowrap}
.list th:nth-child(2),.list td:nth-child(2){border-left:1px solid #2b3036}
.list th:nth-child(1){width:49%}.list th:nth-child(2){width:22%;padding-left:9px}.list th:nth-child(n+3){text-align:right;color:#b87400}
.list th:nth-child(4){color:#0098b0;padding-right:6px}
.list td{height:20px;padding:0 6px;background:#121a25;white-space:nowrap;line-height:18px}
.list tr:nth-child(even) td{background:#000}
.list td:nth-child(2){font-weight:700;padding-left:9px}
.list td span{display:flex;justify-content:space-between}
.list td:nth-child(1){padding-left:7px}
.list td:nth-child(1) i{display:inline-block;width:16px;height:16px;border-radius:50%;background:#36393d;font:700 12px/16px "DejaVu Sans";text-align:center;margin-right:6px;vertical-align:top}
.list td:nth-child(n+3){text-align:right;padding-right:12px;position:relative;background:#22251f}
.list td:nth-child(4){background:#0d2430!important}
.list tr:nth-child(even) td:nth-child(3){background:#201a14}
.list tr:nth-child(even) td:nth-child(4){background:#04191c!important}
.list td:nth-child(n+3) i{position:absolute;right:1px;top:0;font-size:9px;font-style:normal}
.upc{color:#00e528}.dnc{color:#ff3438}
.view{margin-top:12px;height:20px;background:#373b42;border-top:1px solid #000;display:flex;justify-content:flex-end}
.view--low{margin-top:26px}
.view button{border-left:1px solid #000;padding:0 8px;font-size:12px;font-weight:700;color:#ccc}
.pad14{padding-bottom:14px}.pad34{padding-bottom:34px}
.live{flex:1;min-width:0;background:#000;padding:2px 0 0 2px}
.pills{display:flex;gap:4px;height:22px}
.pill{height:20px;border-radius:3px;background:#474d57;font-size:12px;padding:0 19px;color:#ddd}
.pill--on{background:#06336e;color:#fff}
```
FILE: app.js
```js
const $ = s => document.querySelector(s);
const all = (s, f) => document.querySelectorAll(s).forEach(f);
const ic = (n, c = 's12') => `<svg class="ic ${c}"><use href="#${n}"/></svg>`;

/* ---------- shared chrome ---------- */
all('[data-tools]', el => {
  el.innerHTML = `<div class="tl">${ic('i-plus', 's20')}${ic('i-arrows', 's22')}${ic('i-bell', 's20')}${ic('i-search', 's20')}</div>
  <time>11:28:32 CDT</time><span class="grow"></span><button class="open">Compte ouvert</button>
  <div class="acct a1">COMPTE<span><i>D</i>DEMO4480988 ${ic('i-chev')}</span></div>
  <div class="acct a2">ÉQUITÉ<span>1,000.00 <em>USD</em></span></div>
  <div class="acct a3">PROFITS/PERTES EN COURS<span>0.00 <em>USD</em>${ic('i-chev')}</span></div>
  <div class="marge">MARGE JOURNALIÈRE<i></i><b>0%</b><span>MARGE INITIALE</span><i></i><b>0%</b></div>` +
  (el.classList.contains('tools--slider') ? `<span class="slide">${ic('i-sliders', 's20')}</span>` : '');
});
all('[data-panelctl]', el => { el.innerHTML = 'H' + ic('i-gear', 's10') + ic('i-max', 's10') + ic('i-out', 's10') + ic('i-x', 's8'); });
all('[data-quote]', el => {
  const k = el.dataset.quote;
  el.innerHTML = `<div class="sym"><b>NQM5</b><small>E-MINI NASDAQ 100</small></div>
  <div class="fact last"><small>DERNIER</small><strong>20195.00</strong><span>-293.50 (-1.43%)</span></div>
  <div class="fact f97"><small>BID</small><strong>20194.75</strong><span>2</span></div>
  <div class="fact f96"><small>ASK</small><strong>20195.25</strong><span>${k}</span></div>
  <div class="fact f122"><small>POSITION</small><strong>0</strong><span>-.-- USD</span></div>
  <div class="orders"><button class="btn green">Marché d'achat</button><button class="btn red">Marché de ve...</button><button class="btn green">Acheter l'offre</button><button class="btn red">Vendre Ask</button></div>
  <div class="ctl"><div><span class="combo"><input aria-label="Quantité" value="1"><button aria-label="Choisir">${ic('i-chev')}</button></span><span class="duo"><button class="btn grey">Quitter March...</button><button class="btn grey" aria-label="Plus">${ic('i-chev')}</button></span></div>
  <div><span class="atm">ATM</span><button class="off">OFF ${ic('i-chev', 's10')}</button>${ic('i-gear', 's14')}<span class="seg"><button class="on">DAY</button><button>GTC</button></span>${ic('i-gear', 's14')}</div></div>`;
});
const apps = ['loupe', 'folder', 'bird', 'chrome', 'vlc', 'note', 'gear', 'crab', 'lines', 'discord', 'pdf', 'bi', 'pc', 'calc', 'gold', 'cmc', 'cells', 'xl'];
all('[data-taskbar]', el => {
  el.innerHTML = `<button class="start" aria-label="Démarrer">${ic('i-win10', 's16')}</button><label class="tsearch">${ic('i-search', 's16')}<input placeholder="Taper ici pour rechercher" aria-label="Rechercher"></label>
  <button class="app app--tv" aria-label="Vue des tâches">${ic('i-taskview')}</button>` +
  apps.map(a => `<button class="app ${a === 'folder' ? 'app--open' : a === 'chrome' ? 'app--on' : ''}" aria-label="${a}">${ic('t-' + a)}</button>`).join('') +
  `<button class="app app--open" aria-label="Tradovate">${ic('i-tv')}</button><span class="grow"></span><div class="tray">${ic('i-pen')}<span>17:28<br>26-03-25</span></div>`;
});
all('[data-rail]', el => {
  const live = el.dataset.rail === 'live';
  el.innerHTML = ['user', 'headset', 'help', ...(live ? ['cmc'] : []), 'card'].map(n => ic('i-' + n)).join('') + '<hr>' +
    ['doc', 'list', 'tag', 'calc', 'scan', 'grad', 'cog', 'win'].map(n => ic('i-' + n)).join('') + '<span class="grow"></span>' + ic('i-info') + ic('i-power');
});
all('[data-ctools]', el => {
  const d = el.dataset.ctools === 'demo';
  el.innerHTML = `<span class="sq">${ic('i-pagelist', 's16')}</span><span class="sq">${ic('i-grid', 's16')}</span><span class="w84">${d ? '1 minute' : '10 secondes'}</span><b>10s</b><b>1m</b><b>5m</b><span class="w89">${d ? '4 heures' : '7 heures'}</span><b>1S</b><b class="w27">1Mo</b>${d ? '<b class="w27">3Mo</b>' : ''}
  <span class="mod">${ic('i-models', 's14')}Modèles</span><b>1</b><b>2</b><b>3</b><b>4</b><b>5</b><span class="ach">${ic('i-candles', 's14')}${d ? 'Achat' : 'Vente'}</span><span class="lie">${ic('i-link', 's14')}Lié</span><span class="grow"></span><span class="par">${ic('i-bulb', 's14')}Paramètres</span>`;
});
all('[data-cfoot]', el => {
  el.innerHTML = `<span class="fl"><i>${ic('i-refresh')}</i><i>${ic('i-ban')}</i><i class="blue">${ic('i-pencil')}</i><i class="blue">${ic('i-node')}</i></span>
  <span class="n60">Favoris</span><span class="n58">★</span><span class="n70">Période</span><span class="n130">Outils De Dessin</span><span class="n70">Indicateurs</span><span class="n130">Figures</span>
  <span class="fr"><i>${ic('i-eject')}</i><i>${ic('i-min')}</i><i>${ic('i-plus', 's10')}</i><i class="blue">${ic('i-plus')}</i><i class="blue">${ic('i-expand')}</i></span>`;
});

/* ---------- quote cards ---------- */
const cards = [
  ['US SP...', 'Juin 2025', '▼ 0,89 %', '52,37', '6,0', '5779,3', '3', '5779,9', '3', 'B:5 772,08', 'H:5 836,98'],
  ['US N...', 'Juin 2025', '▼ 1,55 %', '318,75', '2,00', '20194,', '00', '20196,', '00', 'B:20 164,63', 'H:20 538,25'],
  ['US 30', 'Juin 2025', '▼ 0,11 %', '48,95', '3,7', '42872,', '2', '42875,', '9', 'B:42 808,2', 'H:43 149,4'],
  ['Allema...', 'Juin 2025', '▼ 1,33 %', '311,95', '2,0', '23070,', '0', '23072,', '0', 'B:23 057,0', 'H:23 462,5'],
  ['France 40', 'Avr 2025', '▼ 1,11 %', '90,5', '2,0', '8041,', '5', '8043,', '5', 'B:8 039,3', 'H:8 153,5'],
  ['UK 100', 'Juin 2025', '▲ 0,14 %', '12,2', '2,0', '8692,', '3', '8694,', '3', 'B:8 657,3', 'H:8 719,8']];
$('#cards').innerHTML = cards.map(c => `<article class="card"><header>${ic('i-menu')}<div class="name"><span class="cfd">CFD</span><span>${c[0]}<br>${c[1]}</span></div><div class="pct ${c[2][0] === '▲' ? 'upc' : 'dn'}"><span>${c[2]}</span><span>${c[3]}</span></div><span class="meter"></span>${ic('i-x', 's10')}</header>
 <div class="face"><small>VENDRE</small><small>ACHETER</small><p>${c[5]}<span>${c[6]}</span></p><p>${c[7]}<span>${c[8]}</span></p><u>${c[4]}</u></div><div class="lohi"><span>${c[9]}</span><button class="pick">-<i>v</i></button><span>${c[10]}</span></div></article>`).join('');

/* ---------- product lists ---------- */
const lists = [
  ['Indices', 'view', '', [['US SPX 500 - Juin 2025', '▼ 0,89 %', '52,37', '5 779,33', '5 779,93'], ['US NDAQ 100 - Juin 2025', '▼ 1,55 %', '318,75', '20 194,00', '20 196,00', '▼'], ['US 30 - Juin 2025', '▼ 0,11 %', '48,95', '42 872,2', '42 875,9'], ['US Small Cap 2000 - Juin 2025', '▼ 0,84 %', '17,9', '2 096,10', '2 096,60', '▼'], ['Euro 50 - Juin 2025', '▼ 1,41 %', '77,05', '5 349,5', '5 351,5'], ['Allemagne 40 - Juin 2025', '▼ 1,33 %', '311,95', '23 070,0', '23 072,0'], ['France 40 - Avr 2025', '▼ 1,11 %', '90,5', '8 041,5', '8 043,5'], ['UK 100 - Juin 2025', '▲ 0,14 %', '12,2', '8 692,3', '8 694,3']]],
  ['Asie', '', 'pad34', [['Hong Kong 50 - Mar 2025', '▲ 0,14 %', '35', '23 505,0', '23 513,0', '', '▲'], ['Chine A50 - Mar 2025', '▼ 0,27 %', '37,5', '13 420,5', '13 430,5'], ['Japon 225 - Juin 2025', '▼ 0,76 %', '290', '37 522,5', '37 542,5']]],
  ['Obligations', 'view view--low', '', [['US Dollar Index - Juin 2025', '▲ 0,1 %', '0,113', '103,963', '103,993'], ['EUR/USD', '▼ 0,03 %', '3,75', '1,07890', '1,07896', '▼'], ['US T-Note 2 YR - Juin 2025', '▲ 0 %', '0,4', '103,402', '103,422'], ['US T-Note 5 YR - Jui 2024', '▼ 0,01 %', '1,6', '107,697', '107,717'], ['US T-Note 10 YR - Juin 2025', '▼ 0,08 %', '9,4', '110,566', '110,606'], ['Euro OAT - Juin 2025', '▼ 0 %', '0,5', '122,330', '122,370'], ['Euro Bund - Juin 2025', '▲ 0,08 %', '11,5', '128,196', '128,224', '▲'], ['Volatility Index - Avr 2025', '▲ 3,85 %', '0,7', '18,835', '18,915']]],
  ['mMatières premières', '', 'pad14', [['Or', '▼ 0,02 %', '0,81', '3 019,30', '3 019,50'], ['Cuivre - Mai 2025', '▲ 0,09 %', '5,2', '523,15', '523,45'], ['Pétrole US Brut Léger - Mai 2025', '▲ 0,98 %', '68,05', '69,863', '69,898', '▼'], ['Pétrole Brut Brent - Mai 2025', '▲ 1,04 %', '76,55', '73,898', '73,933']]]];
const tone = s => s && s[0] === '▲' ? 'upc' : 'dnc';
$('#lists').innerHTML = lists.map(([t, foot, pad, rows]) => `<section class="panel list ${pad}"><header class="phead"><button class="pmenu" aria-label="Menu">${ic('i-menu')}</button><div class="ptab"><b>${t}</b>${ic('i-chev', 's10')}${ic('i-zoom', 's14')}</div><button class="padd" aria-label="Ajouter">${ic('i-plus', 's10')}</button><span class="grow"></span><span class="meter"></span>${ic('i-expand', 's10')}${ic('i-x', 's10')}</header>
 <table><thead><tr><th>PRODUIT &nbsp;⬍</th><th>PERFORMANCE ⬍</th><th>VENTE</th><th>ACHAT</th></tr></thead><tbody>` +
 rows.map(r => `<tr><td><i>⋮</i>${r[0]}</td><td class="${tone(r[1])}"><span><b>${r[1]}</b><b>${r[2]}</b></span></td><td>${r[3]}${r[5] ? `<i class="${tone(r[5])}">${r[5]}</i>` : ''}</td><td>${r[4]}${r[6] ? `<i class="${tone(r[6])}">${r[6]}</i>` : ''}</td></tr>`).join('') +
 `</tbody></table>${foot ? `<div class="${foot}"><button>Vue Classique ▴</button></div>` : ''}</section>`).join('');

/* ---------- ladder ---------- */
const vol = [265,254,258,238,320,246,325,285,429,369,278,267,320,309,394,381,480,414,399,420,453,421,504,504,515,409,381,334,369,293,354,391,524,361,391,379];
const bid = [2,5,5,6,8,6,8,8,7,8,5,7,6,4,4,6,6,5,8,7,3,5,5,8,6,10,8,10,6,7];
const ask = [6,5,6,2];
$('#ladder').innerHTML = vol.map((v, i) => {
  const cls = i === 3 ? 'down' : i === 4 ? 'hit' : i === 5 ? 'up' : '';
  return `<tr><td></td><td>${i > 4 ? bid[i - 5] ?? '' : ''}</td><td class="${cls}">${i === 4 ? '<small>1</small> ' : ''}${(20196 - i / 4).toFixed(2)}</td><td>${ask[i] ?? ''}</td><td></td><td><i style="width:${Math.round(v / 15)}px"></i><span>${v}</span></td></tr>`;
}).join('');

/* ---------- drawing helpers ---------- */
function rng(s) { return () => (s = (s * 16807) % 2147483647) / 2147483647; }
class Draw {
  constructor(sel, ox, oy) { this.el = $(sel); this.ox = ox; this.oy = oy; this.s = ''; }
  rect(x, y, x2, y2, fill, extra = '') { this.s += `<rect x="${x - this.ox}" y="${y - this.oy}" width="${x2 - x}" height="${y2 - y}" fill="${fill}" ${extra}/>`; return this; }
  band(x, y, y2, fill) { this.s += `<rect x="${x - this.ox}" y="${y - this.oy}" width="100%" height="${y2 - y}" fill="${fill}"/>`; return this; }
  h(y, c, w = 1, dash = '', x1 = this.ox, x2 = null) { this.s += `<line x1="${x1 - this.ox}" x2="${x2 === null ? '100%' : x2 - this.ox}" y1="${y - this.oy}" y2="${y - this.oy}" stroke="${c}" stroke-width="${w}" stroke-dasharray="${dash}"/>`; return this; }
  v(x, y1, y2, c, w = 1, dash = '') { this.s += `<line x1="${x - this.ox}" x2="${x - this.ox}" y1="${y1 - this.oy}" y2="${y2 - this.oy}" stroke="${c}" stroke-width="${w}" stroke-dasharray="${dash}"/>`; return this; }
  t(x, y, txt, size, fill, anchor = 'middle', weight = 400) { this.s += `<text x="${x - this.ox}" y="${y - this.oy + Math.round(size * .36)}" font-size="${size}" fill="${fill}" text-anchor="${anchor}" font-weight="${weight}">${txt}</text>`; return this; }
  tag(x, y, x2, h, txt, size, bg, fg, weight = 400, r = 3) { this.rect(x, y - h / 2, x2, y + h / 2, bg, `rx="${r}"`); return this.t((x + x2) / 2, y, txt, size, fg, 'middle', weight); }
  path(d, c, w) { this.s += `<path d="${d}" stroke="${c}" stroke-width="${w}" fill="none" transform="translate(${-this.ox} ${-this.oy})"/>`; return this; }
  home(x, y) { this.s += `<path d="M${x - 6 - this.ox} ${y - this.oy}v-9l6-8 6 8v9z" fill="#aaa" stroke="#555"/>`; return this; }
  end() { this.el.innerHTML = `<svg>${this.s}</svg>`; }
}
function candles(d, pts, step, body, up, down, jit, wick, seed) {
  const r = rng(seed), P = { u: '', d: '', uw: '', dw: '' };
  let k = 0, prev = pts[0][1];
  for (let x = pts[0][0]; x <= pts[pts.length - 1][0]; x += step) {
    while (k < pts.length - 2 && pts[k + 1][0] < x) k++;
    const [x0, y0] = pts[k], [x1, y1] = pts[k + 1];
    const c = y0 + (y1 - y0) * (x - x0) / (x1 - x0) + (r() - .5) * jit, hi = Math.min(prev, c) - r() * r() * wick, lo = Math.max(prev, c) + r() * r() * wick;
    const n = c <= prev ? 'u' : 'd', px = x.toFixed(1);
    P[n] += `M${px} ${Math.min(prev, c).toFixed(1)}V${(Math.max(prev, c) + 1).toFixed(1)}`;
    P[n + 'w'] += `M${px} ${hi.toFixed(1)}V${lo.toFixed(1)}`;
    prev = c;
  }
  d.path(P.uw, up, 1).path(P.dw, down, 1).path(P.u, up, body).path(P.d, down, body);
}
const pairs = (s, k = 1) => s.trim().split(/\s+/).map(p => p.split(',').map(n => n * k));

/* ---------- TPO profile chart ---------- */
const rows = s => s.split(' ').flatMap(t => { const m = t.match(/^([A-Z]+)(\d+)?$/); return Array(+(m[2] || 1)).fill(m[1]); });
const prof = [
  { n: 100, tx: 74, ty: 572, x: 10, y: 622, box: [6, 673, 118, 807], poc: [721, 6, 119], r: 'T3 ST2 RSTU2 RSTUV OQRSTUV OQRSUV NOPQRSUV NPQUV MQV MV JKL IJKL BCDHI BCDGHI EFGH EFG G' },
  { n: 107, tx: 283, ty: 588, x: 196, y: 611, box: [191, 617, 333, 851], poc: [796, 189, 334], r: 'IJ HIJK2 HIK FGHKLMN DEFHKLMNOQ DEFLMNOPQ ABCDLMOPQ2 ALQR QR2 RS S10 SU STU2 STUV4 TV2 V2' },
  { n: 88, tx: 499, ty: 704, x: 413, y: 734, box: [405, 818, 549, 907], poc: [830, 405, 549], r: 'T TV TUV2 STUV2 SUV2 LMOPRS LMNOPQRS CKLMNOPQRS ABCEIJKQS ABCDEFIJKS BDEFGHIJS FGHJS FGH GH2 G' },
  { n: 122, tx: 715, ty: 532, x: 628, y: 555, box: [622, 561, 765, 784], poc: [713, 620, 766], r: 'U ACDU ABCDFTU ABCDFHITU DEFGHIJTUV EFGHJTUV JTUV JTV JKT KT2 KLT2 KLST LST LS3 LOS LNOPQS2 LMNOPQRS LMNORS2 LMORS LMRS LMS LM L' },
  { n: 118, tx: 945, ty: 707, x: 844, y: 734, box: [838, 762, 1010, 885], poc: [856, 837, 1010], r: 'AEF2 ABCDEFH ABCDEFGH CDGHL CGHLOP GHLMNOPV HIJKLMNOPQUV HIJKMNOPQUV HIJMQUV IJQTUV QSTUV4 QSTU QRST2 RS5' },
  { n: 72, tx: 1146, ty: 309, x: 1089, y: 332, box: [1082, 383, 1168, 528], poc: [445, 1081, 1168], r: 'V UV TUV STUV STU ST RST QRST OPQRS NOPRS NOPS HIJMN HIJLMN HIJKL HKL FGH2 EF E ABCDE ABD' },
  { n: 76, tx: 1326, ty: 204, x: 1247, y: 232, box: [1241, 294, 1369, 383], poc: [314, 1239, 1370], r: 'UV3 QTU QRTU PQRSTU OPQRST NOQRST MNOST FLMNS FGLMS ABCDEGHKL2 HIJKL HIJK HIJ' },
  { n: 83, tx: 1556, ty: 201, x: 1449, y: 221, box: [1442, 238, 1629, 372], poc: [340, 1441, 1629], r: 'G BFGOQR ABCFGHMNOPQRS CDEHIJKMNPQRS DEHIJKLMQRS HKLRS LS S4 ST3 STUV2 TUV4 T2' }];
const vols = [
  [124, 182, 598, 844, 646, 749, '598,3 620,14 640,30 660,25 690,38 725,42 735,34 750,14 770,6 785,12 844,3'],
  [339, 398, 613, 978, 613, 911, '613,2 640,5 665,12 700,7 760,3 840,8 870,5 890,14 911,24 925,26 940,14 965,10 978,1'],
  [556, 614, 729, 932, 757, 858, '729,2 745,14 760,26 800,22 835,28 850,24 865,8 880,18 900,4 932,2'],
  [770, 830, 558, 868, 558, 756, '558,4 580,22 600,38 615,32 650,10 690,8 720,20 740,12 770,16 800,10 840,12 868,2'],
  [1014, 1074, 733, 980, 850, 980, '733,3 770,10 790,20 830,34 850,20 870,32 900,38 940,22 980,4'],
  [1174, 1232, 335, 557, 372, 557, '335,10 355,30 370,40 385,20 410,28 440,34 460,10 500,8 530,4 557,3'],
  [1376, 1434, 229, 400, 262, 364, '229,3 242,42 250,20 262,5 285,20 305,38 320,22 345,16 362,3 385,14 400,1'],
  [1634, 1693, 227, 455, 227, 392, '227,2 245,14 258,34 280,12 310,5 350,10 385,34 395,24 410,32 430,10 455,2']];
{
  const d = new Draw('#tpo', 4, 189);
  [[830, 595, 606], [1168, 461, 472], [1629, 249, 260], [1074, 803, 814]].forEach(b => d.band(b[0], b[1], b[2], '#030d04'));
  d.rect(333, 661, 614, 672, '#030d04').rect(6, 929, 182, 940, '#030d04');
  prof.forEach(p => { const b = p.box; d.rect(...b, '#140404').v(b[0], b[1], b[3], '#4c1616', 2); });
  [[733, 10, 118], [661, 191, 333], [839, 405, 549], [595, 622, 765], [806, 838, 1010], [461, 1082, 1168], [350, 1241, 1369], [249, 1442, 1629]].forEach(b => d.rect(b[1], b[0], b[2], b[0] + 11, '#121204'));
  const r = rng(77);
  vols.forEach(([x, x2, y, y2, b1, b2, w]) => {
    d.rect(x, y, x2, y2, '#061017');
    const pts = pairs(w); let k = 0, blue = '', cy = '', bs = '', cs = '';
    for (let yy = y; yy < y2; yy += 2) {
      while (k < pts.length - 2 && pts[k + 1][0] < yy) k++;
      const [a, c] = [pts[k], pts[k + 1]], base = Math.max(1, a[1] + (c[1] - a[1]) * (yy - a[0]) / (c[0] - a[0]));
      const seg = `M${x} ${yy}h${(base * (.85 + r() * .2)).toFixed(0)}`, spike = r() < .3 ? `M${x} ${yy}h${(base * (1.1 + r() * .5)).toFixed(0)}` : '';
      if (yy >= b1 && yy < b2) { blue += seg; bs += spike; } else { cy += seg; cs += spike; }
    }
    d.path(bs, '#0808a0', 1).path(cs, '#2f6572', 1).path(blue, '#0b10d8', 2).path(cy, '#5aaec4', 2).v(x, b1, b2, '#0000ff', 2);
  });
  d.h(612, '#00008b', 2, '', 800).h(687, '#00008b', 2, '', 339, 614).h(258, '#00008b', 2, '', 1650).h(500, '#00008b', 2, '', 1180).h(886, '#000066', 1, '', 1040).h(748, '#0000a0', 2, '', 160, 183).h(838, '#00008b', 2, '', 590, 614).h(305, '#00008b', 2, '', 1400, 1434);
  [[189, 644, 758], [405, 810, 926], [620, 530, 628], [836, 674, 833], [1081, 508, 590], [1239, 333, 394], [1440, 193, 285]].forEach(v => d.v(...v, '#024257', 2));
  prof.forEach(p => {
    d.t(p.tx, p.ty, 'TPOs: ' + p.n, 12, '#d98072');
    rows(p.r).forEach((line, i) => [...line].forEach((ch, j) => d.t(p.x + Math.round(j * 14.6), Math.round(p.y + i * 11.14), ch, 11, { A: '#f00', B: '#008000', C: '#00f' }[ch] || '#e08e7c')));
    d.h(p.poc[0], '#7b68ee', 2, '', p.poc[1], p.poc[2]);
  });
  d.h(194, '#2b8a34', 2).h(482, '#c96f5c', 2).h(507, '#dc1f45').h(508, '#999', 1, '1 1').v(1678, 189, 1018, '#aaa', 1, '2 2').end();
  const y = new Draw('#tpo-y', 1849, 189);
  for (let i = 0; i < 19; i++) y.t(1854, 224 + Math.round(i * 42.1), (20500 - i * 50) + '.00', 13, '#ddd', 'start');
  y.tag(1849, 193, 1909, 18, '20536.75', 13, '#3cb043', '#fff').tag(1849, 481, 1909, 18, '20195.00', 13, '#f2836b', '#fff').tag(1849, 508, 1909, 20, '20163.50', 13, '#555558', '#fff').end();
  const x = new Draw('#tpo-x', 0, 1018);
  [[67, '2025/03/17'], [182, '2025/03/18'], [254, '10:30'], [398, '2025/03/19'], [499, '09:30'], [613, '2025/03/20'], [700, '09:00'], [830, '2025/03/21'], [945, '09:00'], [1074, '2025/03/24'], [1161, '12:00'], [1232, '2025/03/25'], [1333, '09:00'], [1435, '2025/03/26'], [1519, '09:00'], [1779, '22:30']].forEach(t => x.t(t[0], 1026, t[1], 13, '#ddd'));
  x.tag(1607, 1027, 1749, 17, '2025/03/26 14:30:00', 13, '#47484b', '#ddd').end();
}

/* ---------- 100-tick chart ---------- */
{
  const d = new Draw('#tick', 2414, 195), r = rng(5);
  const right = 3720, env = pairs('195,88 205,100 212,95 222,108 235,100 245,130 255,125 259,175 270,180 282,170 293,170 300,125 307,75 315,110 325,130 335,185 340,190 350,150 360,205 366,175 375,155 383,150 390,85 400,60 410,115 420,95 430,85 440,110 450,115 460,80 470,40 480,45 490,70 500,60 510,55 520,30 530,20 545,12 560,6 570,10 580,20 590,10 605,7 615,40 627,65 633,50 640,55 650,70 658,70 668,100 680,130 690,110 700,100 715,105 722,130 732,85 740,55 750,55 760,40 765,10');
  let k = 0, a = '', b = '';
  for (let y = 196; y < 766; y += 2) {
    while (k < env.length - 2 && env[k + 1][0] < y) k++;
    const [p, q] = [env[k], env[k + 1]], w = p[1] + (q[1] - p[1]) * (y - p[0]) / (q[0] - p[0]);
    a += `M${right} ${y}h${(-w * .92).toFixed(0)}`;
    b += `M${right} ${y}h${(-w * (.95 + r() * .3)).toFixed(0)}`;
  }
  d.path(b, '#2b2f38', 1).path(a, '#4a4f5c', 2);
  d.path('M3464 294.500H3720M3452 365H3720M3488 337H3720M3476 259H3720M3500 358H3720M3560 435H3720M3572 470H3720M3526 390H3720', '#4a4f5c', 1);
  d.path('M3640 641H3720', '#b01822', 1).rect(3714, 638, 3720, 664, '#b01822').rect(3715, 664, 3720, 692, '#0f7a22');
  const pts = pairs('2414,282 2419,306 2437,273 2450,271 2462,255 2470,265 2476,239 2485,278 2497,257 2506,282 2511,245 2519,284 2524,261 2528,286 2536,261 2541,267 2548,241 2557,253 2571,229 2581,273 2587,241 2594,269 2604,314 2609,284 2616,322 2628,339 2636,375 2644,380 2652,402 2657,373 2662,394 2674,367 2681,392 2691,412 2697,445 2706,416 2716,382 2719,388 2731,339 2741,322 2748,339 2760,312 2775,359 2786,349 2794,375 2807,396 2824,355 2834,412 2839,422 2842,408 2847,435 2853,412 2862,457 2871,449 2877,473 2887,449 2896,465 2902,437 2911,453 2915,435 2921,482 2924,469 2937,508 2943,486 2954,496 2962,527 2969,516 2979,551 2985,585 2991,585 3006,630 3012,614 3018,656 3027,664 3034,621 3040,640 3051,633 3060,606 3070,644 3077,628 3084,703 3089,642 3095,692 3107,749 3117,689 3122,696 3125,685 3129,703 3137,681 3142,714 3152,664 3157,667 3167,649 3176,674 3191,678 3204,731 3218,674 3224,706 3229,692 3242,724 3248,765 3253,746 3261,760 3267,721 3275,730 3292,671 3304,639 3313,681 3322,703 3331,674 3342,703 3351,653 3361,667 3369,721 3377,710 3385,731 3392,692 3399,717 3412,739 3422,706 3430,746 3436,731 3444,760 3447,742 3450,764 3458,746 3467,710 3479,678 3490,746 3497,728 3508,689 3514,674 3524,681 3529,667');
  candles(d, pts, 1.5, 2, '#2f9e44', '#e8130c', 6, 16, 31);
  d.h(665, '#a4614f', 2).h(768, '#dc1f45').h(776, '#888', 1, '1 1').v(2838, 195, 796, '#888', 1, '1 1').end();
  const y = new Draw('#tick-y', 3720, 195);
  for (let i = 0; i < 17; i++) y.t(3724, 223 + Math.round(i * 35.25), (20320 - i * 10) + '.00', 13, '#ddd', 'start');
  y.tag(3720, 767, 3779, 12, '20165.50', 13, '#e42545', '#fff').tag(3720, 664, 3779, 18, '20195.00', 13, '#f2836b', '#fff').tag(3720, 775, 3779, 20, '20163.50', 13, '#555558', '#fff').end();
  const x = new Draw('#tick-x', 2408, 797);
  [[2427, '16:05'], [2525, '16:15'], [2629, '16:25'], [2721, '16:30'], [2950, '16:50'], [3063, '16:55'], [3183, '17:00'], [3275, '17:05'], [3341, '17:10'], [3444, '17:20'], [3557, '17:30'], [3658, '17:40']].forEach(t => x.t(t[0], 805, t[1], 13, '#ddd'));
  x.tag(2767, 805, 2908, 18, '2025/03/26 16:41:29', 13, '#47484b', '#ddd').end();
}

/* ---------- CFD demo chart ---------- */
{
  const d = new Draw('#bl', 41, 1316);
  d.rect(41, 1518, 355, 1548, '#e4efe3', 'stroke="#1c861c" stroke-dasharray="2 1"').rect(30, 1686, 1034, 1710, '#e4efe3', 'stroke="#7db37d"').rect(571, 1766, 922, 1795, '#dcebdb', 'stroke="#1c861c"').rect(38, 1455, 362, 1461, '#e4efe3', 'stroke="#1c861c" stroke-width="2" stroke-dasharray="2 1"');
  const pts = pairs('43,1398 67,1392 92,1402 98,1415 113,1417 140,1409 150,1425 165,1427 178,1434 199,1434 206,1446 216,1438 227,1446 234,1446 245,1430 256,1425 263,1407 273,1415 294,1411 304,1404 309,1411 321,1419 329,1400 343,1415 357,1419 367,1438 392,1457 407,1471 415,1461 421,1497 427,1453 439,1423 450,1469 458,1465 465,1499 478,1537 484,1549 488,1580 493,1572 499,1614 505,1637').concat(
    pairs('211,660 218,665 226,670 232,685 236,705 240,728 246,710 252,695 258,690 263,700 268,692 274,710 278,712 283,690 290,695 298,682 306,680 313,688 322,678 328,690 334,700 340,698 346,706 352,705 358,722 364,735 368,752 374,758 379,765 384,768 390,760 395,765 401,758 407,767 413,762 420,753', 2.45));
  candles(d, pts, 3.47, 3, '#1f9fb0', '#cfa030', 10, 26, 9);
  d.h(1321, '#f0f', 2).h(1350, 'red', 2, '2 2', 169).h(1412, '#ffa500', 3).h(1455, '#e0c', 1, '2 2', 365).h(1589, '#f0f', 1).h(1597, '#00b8ee', 3).h(1607, '#ffa500', 2, '5 4').h(1801, '#ffa500', 3).h(1844, '#ff4a3a', 1).h(1887, '#ffa500', 3).h(2039, '#ffa500', 2, '5 4');
  d.t(44, 1445, '(50,00 %)', 14, '#f0f', 'start', 700).t(44, 1579, '(100,00 %)', 14, '#f0f', 'start', 700).t(42, 1352, '-322,50 / -1,57 %', 16, 'red', 'start', 700).home(1029, 1328).end();
  const y = new Draw('#bl-y', 1198, 1316);
  [[1379, '20 500,00'], [1532, '20 400,00'], [1685, '20 300,00'], [1991, '20 100,00']].forEach(t => y.t(1278, t[0], t[1], 16, '#111', 'end', 700));
  y.tag(1201, 1322, 1264, 16, '20 538,07', 13, '#f0f', '#111', 700, 2).tag(1198, 1350, 1284, 21, '20 518,50', 16, 'red', '#fff', 700, 0).tag(1201, 1455, 1264, 18, '20 450,44', 13, '#f0f', '#111', 700, 2).tag(1201, 1589, 1264, 18, '20 362,82', 13, '#f0f', '#111', 700, 2).tag(1198, 1805, 1284, 18, '20 221,95', 16, '#ccc', '#111', 700, 0).tag(1198, 1844, 1284, 22, '20 196,00', 16, '#c00014', '#fff', 700, 0).end();
  const x = new Draw('#bl-x', 41, 1296);
  [[118, '13:00'], [326, '14:00'], [535, '15:00'], [743, '16:00'], [952, '17:00'], [1160, '18:00']].forEach(t => x.t(t[0], 1304, t[1], 16, '#111', 'middle', 700));
  x.t(44, 1312, '(0,00 %)', 14, '#f0f', 'start', 700).end();
}

/* ---------- CFD live chart ---------- */
{
  const d = new Draw('#br', 1956, 1222);
  const pts = pairs('1956,1308 1959,1338 1964,1331 1981,1352 1986,1331 1992,1407 2000,1427 2005,1396 2009,1407 2016,1392 2020,1404 2029,1346 2039,1346 2042,1404 2048,1430 2055,1384 2061,1396 2067,1338 2075,1331 2083,1365 2091,1373 2099,1335 2108,1296 2116,1308 2120,1300 2131,1358 2137,1350 2144,1361 2147,1335 2153,1358 2159,1342 2166,1350 2172,1335 2175,1350 2186,1308 2192,1338 2200,1331 2206,1338 2211,1312 2225,1312 2234,1293 2241,1312 2253,1277 2259,1300 2266,1323 2275,1327 2281,1323 2286,1296 2300,1333 2309,1273 2317,1323 2326,1327 2331,1296 2341,1323 2347,1346 2355,1296 2362,1300 2372,1319 2380,1304 2386,1266 2391,1293 2396,1262 2402,1293 2412,1285 2424,1266 2431,1270 2441,1258 2447,1308 2455,1319 2462,1258 2467,1277 2469,1250 2475,1285 2481,1346 2491,1304 2495,1342 2503,1365 2511,1371 2519,1388 2521,1442 2527,1453 2532,1480 2536,1438 2541,1480 2546,1459 2551,1474 2555,1427 2562,1465 2572,1465 2580,1526 2587,1534 2589,1507 2597,1503 2601,1469 2611,1472 2619,1434 2625,1384 2630,1384 2634,1361 2641,1384 2653,1392 2656,1354 2666,1358 2672,1344 2678,1369 2691,1377 2697,1404 2706,1423 2716,1407 2720,1415 2725,1404 2731,1442 2741,1446 2747,1457 2756,1451 2766,1476 2770,1461 2778,1480 2784,1451 2796,1449 2801,1419 2809,1446 2816,1499 2828,1511 2839,1541 2844,1499 2853,1511 2863,1538 2869,1576 2875,1568 2882,1595 2888,1564 2901,1576 2907,1587 2915,1568 2919,1541 2926,1549 2929,1534 2935,1576 2941,1530 2948,1606 2955,1583 2962,1622 2966,1640 2973,1618 2988,1640').concat(
    pairs('1225,683 1230,700 1233,735 1236,745 1240,742 1248,748 1254,745 1258,750 1262,770 1265,795 1268,800 1272,785 1276,775 1279,768 1284,775 1288,785 1292,800 1296,785 1302,778 1307,790 1310,785 1313,800 1317,832 1322,820 1325,800 1330,812 1335,790 1340,765 1344,772 1348,785 1352,778 1356,800 1360,780 1368,790 1372,780 1377,768 1381,775 1384,800 1388,798 1391,812 1396,795 1400,808 1406,820 1412,800 1418,815 1425,795 1430,800 1436,820 1443,835 1448,828 1452,838 1457,818 1463,810 1470,828 1476,818 1480,822 1486,800 1491,785 1496,790 1501,782 1507,780', 2.45));
  candles(d, pts, 3.08, 3, '#1f7ea8', '#d8a83a', 16, 30, 3);
  d.h(1328, '#5bcff2', 3).h(1401, '#108010', 4, '2 1').h(1790, '#999', 1).v(2963, 1222, 2145, '#999', 1).h(1857, '#ffa500', 3).h(1907, '#ff6a5a', 1);
  [['O:', '20 049,63', 1962, 1980], ['H:', '20 050,86', 2060, 2078], ['L:', '20 044,21', 2158, 2176], ['C:', '20 044,58', 2256, 2274]].forEach(o => d.t(o[2], 1236, o[0], 16, '#111', 'start', 700).t(o[3], 1236, o[1], 15, '#dba93a', 'start'));
  d.home(3694, 1233).end();
  const y = new Draw('#br-y', 3757, 1222);
  [[1341, '20 100,00'], [1508, '20 070,00'], [1675, '20 040,00'], [1842, '20 010,00'], [2010, '19 980,00']].forEach(t => y.t(3836, t[0], t[1], 16, '#111', 'end', 700));
  y.tag(3759, 1328, 3824, 17, '20 102,12', 14, '#5bcff2', '#111', 400, 2).tag(3757, 1790, 3840, 18, '20 018,99', 16, '#ccc', '#111', 700, 0).tag(3759, 1857, 3824, 17, '20 007,18', 14, '#ffa500', '#111', 400, 2).tag(3757, 1907, 3840, 22, '19 998,22', 16, '#00a50c', '#fff', 700, 0).end();
  const x = new Draw('#br-x', 1956, 1202);
  [[2082, '16:00'], [2359, '16:15'], [2635, '16:30'], [3189, '17:00'], [3465, '17:15'], [3742, '17:30']].forEach(t => x.t(t[0], 1210, t[1], 16, '#111', 'middle', 700));
  x.tag(2877, 1210, 3049, 18, '26 mars 2025 16:49:00', 16, '#000', '#fff', 700, 0).end();
}
```
